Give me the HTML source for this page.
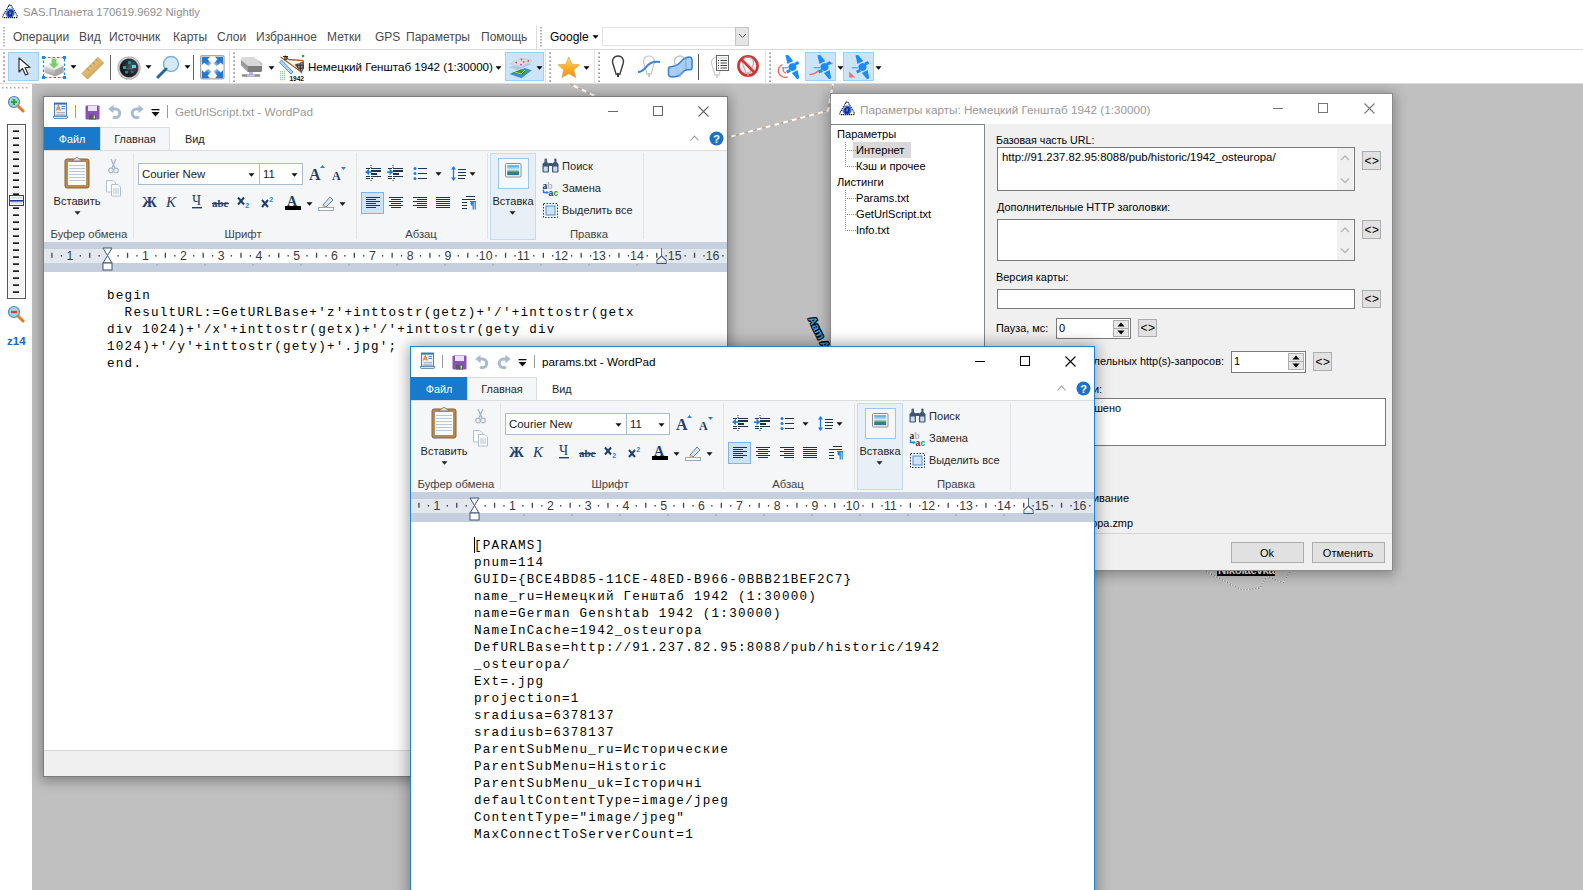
<!DOCTYPE html>
<html><head><meta charset="utf-8">
<style>
html,body{margin:0;padding:0;width:1583px;height:890px;overflow:hidden;background:#fff;position:relative;font-family:"Liberation Sans",sans-serif}
.a{position:absolute;display:block}
.t{position:absolute;white-space:pre;line-height:20px;height:20px;font-family:"Liberation Sans",sans-serif}
.doc{position:absolute;margin:0;font-family:"Liberation Mono",monospace;font-size:12.6px;letter-spacing:1.24px;line-height:17px;color:#000}
</style></head><body>
<div class="a" style="left:0px;top:0px;width:1583px;height:84px;background:#fff"></div>
<svg class="a" style="left:2px;top:4px;" width="16" height="15" viewBox="0 0 16 15"><path d="M6.8 1.6Q8 0 9.2 1.6L15 11.5Q16 13.6 13.6 13.6H2.4Q0 13.6 1 11.5Z" fill="#fff" stroke="#111" stroke-width="1.1" stroke-dasharray="1.3 0.7"/><circle cx="8" cy="9" r="4.6" fill="#2d6ff0"/><path d="M5 7Q8 5 11 7L10 12Q8 13.5 6 12Z" fill="#0b2a9a"/><rect x="7.4" y="7.5" width="1.4" height="3" fill="#b09040"/><path d="M4 9Q5 6 7 6" stroke="#fff" stroke-width="0.8" fill="none" opacity="0.7"/></svg>
<div class="t " style="left:23px;top:2px;font-size:11.3px;color:#8f8f8f;">SAS.Планета 170619.9692 Nightly</div>
<svg class="a" style="left:3px;top:27px;" width="3" height="22" viewBox="0 0 3 22"><rect x="0" y="0" width="2" height="1.5" fill="#b5b5b5"/><rect x="0" y="3" width="2" height="1.5" fill="#b5b5b5"/><rect x="0" y="6" width="2" height="1.5" fill="#b5b5b5"/><rect x="0" y="9" width="2" height="1.5" fill="#b5b5b5"/><rect x="0" y="12" width="2" height="1.5" fill="#b5b5b5"/><rect x="0" y="15" width="2" height="1.5" fill="#b5b5b5"/><rect x="0" y="18" width="2" height="1.5" fill="#b5b5b5"/></svg>
<div class="t " style="left:13px;top:27px;font-size:12px;color:#4a4a4a;">Операции</div>
<div class="t " style="left:79px;top:27px;font-size:12px;color:#4a4a4a;">Вид</div>
<div class="t " style="left:109px;top:27px;font-size:12px;color:#4a4a4a;">Источник</div>
<div class="t " style="left:173px;top:27px;font-size:12px;color:#4a4a4a;">Карты</div>
<div class="t " style="left:217px;top:27px;font-size:12px;color:#4a4a4a;">Слои</div>
<div class="t " style="left:256px;top:27px;font-size:12px;color:#4a4a4a;">Избранное</div>
<div class="t " style="left:327px;top:27px;font-size:12px;color:#4a4a4a;">Метки</div>
<div class="t " style="left:375px;top:27px;font-size:12px;color:#4a4a4a;">GPS</div>
<div class="t " style="left:406px;top:27px;font-size:12px;color:#4a4a4a;">Параметры</div>
<div class="t " style="left:481px;top:27px;font-size:12px;color:#4a4a4a;">Помощь</div>
<div class="a" style="left:536px;top:25px;width:1px;height:24px;background:#dcdcdc"></div>
<svg class="a" style="left:540px;top:27px;" width="3" height="22" viewBox="0 0 3 22"><rect x="0" y="0" width="2" height="1.5" fill="#b5b5b5"/><rect x="0" y="3" width="2" height="1.5" fill="#b5b5b5"/><rect x="0" y="6" width="2" height="1.5" fill="#b5b5b5"/><rect x="0" y="9" width="2" height="1.5" fill="#b5b5b5"/><rect x="0" y="12" width="2" height="1.5" fill="#b5b5b5"/><rect x="0" y="15" width="2" height="1.5" fill="#b5b5b5"/><rect x="0" y="18" width="2" height="1.5" fill="#b5b5b5"/></svg>
<div class="t " style="left:550px;top:27px;font-size:12px;color:#000;">Google</div>
<svg class="a" style="left:592px;top:35px;" width="7" height="4" viewBox="0 0 7 4"><path d="M0.5 0.3H6.5L3.5 3.8Z" fill="#000"/></svg>
<div class="a" style="left:602px;top:27px;width:146px;height:19px;background:#fff;border:1px solid #e3e3e3;box-sizing:border-box"></div>
<div class="a" style="left:735px;top:27px;width:14px;height:19px;background:#e5e5e5;border:1px solid #c4c4c4;box-sizing:border-box"></div>
<svg class="a" style="left:738px;top:33px;" width="9" height="6" viewBox="0 0 9 6"><path d="M1 1L4.5 4.5L8 1" fill="none" stroke="#555" stroke-width="1"/></svg>
<div class="a" style="left:0px;top:49px;width:1583px;height:1px;background:#d9d9d9"></div>
<svg class="a" style="left:3px;top:52px;" width="3" height="32" viewBox="0 0 3 32"><rect x="0" y="0" width="2" height="2" fill="#c4c4c4"/><rect x="1" y="1" width="1" height="1" fill="#999"/><rect x="0" y="4" width="2" height="2" fill="#c4c4c4"/><rect x="1" y="5" width="1" height="1" fill="#999"/><rect x="0" y="8" width="2" height="2" fill="#c4c4c4"/><rect x="1" y="9" width="1" height="1" fill="#999"/><rect x="0" y="12" width="2" height="2" fill="#c4c4c4"/><rect x="1" y="13" width="1" height="1" fill="#999"/><rect x="0" y="16" width="2" height="2" fill="#c4c4c4"/><rect x="1" y="17" width="1" height="1" fill="#999"/><rect x="0" y="20" width="2" height="2" fill="#c4c4c4"/><rect x="1" y="21" width="1" height="1" fill="#999"/><rect x="0" y="24" width="2" height="2" fill="#c4c4c4"/><rect x="1" y="25" width="1" height="1" fill="#999"/><rect x="0" y="28" width="2" height="2" fill="#c4c4c4"/><rect x="1" y="29" width="1" height="1" fill="#999"/></svg>
<div class="a" style="left:8px;top:52px;width:31px;height:29px;background:#cce4f7;border:1px solid #99d1ff;box-sizing:border-box"></div>
<svg class="a" style="left:17px;top:57px;" width="14" height="20" viewBox="0 0 14 20"><path d="M2 1V15L5.5 11.5L8.5 18L11 17L8 10.5H13Z" fill="#fff" stroke="#333" stroke-width="1.2" stroke-linejoin="round"/></svg>
<svg class="a" style="left:42px;top:56px;" width="25" height="23" viewBox="0 0 25 23"><defs><linearGradient id="bx" x1="0" y1="0" x2="0" y2="1"><stop offset="0" stop-color="#f4f4f4"/><stop offset="1" stop-color="#9c9c9c"/></linearGradient></defs><rect x="1.5" y="1.5" width="21" height="20" fill="none" stroke="#1e88e5" stroke-width="1.2" stroke-dasharray="2.5 2"/><path d="M2.5 10.5L11 7L21.5 10V16.5L13 20.5L2.5 16.5Z" fill="url(#bx)"/><path d="M2.5 10.5L13 14L21.5 10L11 7Z" fill="#ececec"/><path d="M13 14V20.5L21.5 16.5V10Z" fill="#a8a8a8"/><path d="M9.5 2.5H14.5V7.5H17L12 12.5L7 7.5H9.5Z" fill="#62c054" opacity="0.8"/><rect x="0" y="0" width="3" height="3" fill="#1e88e5"/><rect x="21" y="0" width="3" height="3" fill="#1e88e5"/><rect x="0" y="20" width="3" height="3" fill="#1e88e5"/><rect x="21" y="20" width="3" height="3" fill="#1e88e5"/></svg>
<svg class="a" style="left:70px;top:65px;" width="7" height="4" viewBox="0 0 7 4"><path d="M0.5 0.3H6.5L3.5 3.8Z" fill="#000"/></svg>
<svg class="a" style="left:81px;top:56px;" width="24" height="24" viewBox="0 0 24 24"><defs><linearGradient id="rg" x1="0" y1="0" x2="1" y2="1"><stop offset="0" stop-color="#f4d89a"/><stop offset="1" stop-color="#c8943e"/></linearGradient></defs><path d="M1 17.5L17 1.5L22.5 7L6.5 23Z" fill="url(#rg)" stroke="#b88838" stroke-width="0.8"/><path d="M6 12.5L8 14.5M9 9.5L10.5 11M12 6.5L14 8.5M15 3.5L16.5 5" stroke="#9a7030" stroke-width="0.7"/></svg>
<div class="a" style="left:110px;top:55px;width:1px;height:25px;background:#666"></div>
<svg class="a" style="left:117px;top:56px;" width="24" height="24" viewBox="0 0 24 24"><defs><radialGradient id="gg" cx="0.5" cy="0.5" r="0.5"><stop offset="0.78" stop-color="#555"/><stop offset="0.88" stop-color="#d8d8d8"/><stop offset="1" stop-color="#9a9a9a"/></radialGradient><radialGradient id="gi" cx="0.65" cy="0.4" r="0.7"><stop offset="0" stop-color="#3a6a70"/><stop offset="0.6" stop-color="#202428"/><stop offset="1" stop-color="#111"/></radialGradient></defs><circle cx="12" cy="12" r="11.5" fill="url(#gg)"/><circle cx="12" cy="12" r="9" fill="url(#gi)"/><rect x="6" y="10" width="3" height="3" fill="#2aa0a8"/><rect x="11" y="5" width="3" height="3" fill="#2a9aa0" opacity="0.8"/><rect x="15" y="9" width="4" height="3" fill="#38e0e8"/><rect x="8" y="15" width="3" height="2.5" fill="#1c8890"/><rect x="14" y="15" width="2.5" height="2" fill="#1c8890" opacity="0.8"/><path d="M9 12.5H16" stroke="#8ab" stroke-width="0.5" opacity="0.6"/></svg>
<svg class="a" style="left:145px;top:65px;" width="7" height="4" viewBox="0 0 7 4"><path d="M0.5 0.3H6.5L3.5 3.8Z" fill="#000"/></svg>
<svg class="a" style="left:156px;top:55px;" width="24" height="25" viewBox="0 0 24 25"><circle cx="15" cy="9" r="7.5" fill="#d5eaf7" stroke="#7fb3d5" stroke-width="1.5"/><path d="M10 14L2 22" stroke="#1d6a9a" stroke-width="3" stroke-linecap="round"/></svg>
<svg class="a" style="left:184px;top:65px;" width="7" height="4" viewBox="0 0 7 4"><path d="M0.5 0.3H6.5L3.5 3.8Z" fill="#000"/></svg>
<div class="a" style="left:193px;top:55px;width:1px;height:25px;background:#666"></div>
<svg class="a" style="left:200px;top:55px;" width="25" height="25" viewBox="0 0 25 25"><defs><linearGradient id="fg" x1="0" y1="0" x2="1" y2="1"><stop offset="0" stop-color="#2a78cc"/><stop offset="0.55" stop-color="#2a78cc"/><stop offset="1" stop-color="#2a78cc" stop-opacity="0"/></linearGradient></defs><rect x="0.6" y="0.6" width="23.5" height="23.2" rx="1.5" fill="#fff" stroke="#a9a9a9" stroke-width="1.2"/><path d="M1.8 1.8H10L7.6 4.4L11.6 8.4L8.4 11.6L4.4 7.6L1.8 10Z" fill="url(#fg)"/><g transform="translate(25 0) scale(-1 1)"><path d="M1.8 1.8H10L7.6 4.4L11.6 8.4L8.4 11.6L4.4 7.6L1.8 10Z" fill="url(#fg)"/></g><g transform="translate(0 25) scale(1 -1)"><path d="M1.8 1.8H10L7.6 4.4L11.6 8.4L8.4 11.6L4.4 7.6L1.8 10Z" fill="url(#fg)"/></g><g transform="translate(25 25) scale(-1 -1)"><path d="M1.8 1.8H10L7.6 4.4L11.6 8.4L8.4 11.6L4.4 7.6L1.8 10Z" fill="url(#fg)"/></g></svg>
<div class="a" style="left:229px;top:50px;width:1px;height:33px;background:#e1e1e1"></div>
<svg class="a" style="left:233px;top:52px;" width="3" height="32" viewBox="0 0 3 32"><rect x="0" y="0" width="2" height="2" fill="#c4c4c4"/><rect x="1" y="1" width="1" height="1" fill="#999"/><rect x="0" y="4" width="2" height="2" fill="#c4c4c4"/><rect x="1" y="5" width="1" height="1" fill="#999"/><rect x="0" y="8" width="2" height="2" fill="#c4c4c4"/><rect x="1" y="9" width="1" height="1" fill="#999"/><rect x="0" y="12" width="2" height="2" fill="#c4c4c4"/><rect x="1" y="13" width="1" height="1" fill="#999"/><rect x="0" y="16" width="2" height="2" fill="#c4c4c4"/><rect x="1" y="17" width="1" height="1" fill="#999"/><rect x="0" y="20" width="2" height="2" fill="#c4c4c4"/><rect x="1" y="21" width="1" height="1" fill="#999"/><rect x="0" y="24" width="2" height="2" fill="#c4c4c4"/><rect x="1" y="25" width="1" height="1" fill="#999"/><rect x="0" y="28" width="2" height="2" fill="#c4c4c4"/><rect x="1" y="29" width="1" height="1" fill="#999"/></svg>
<svg class="a" style="left:240px;top:55px;" width="26" height="25" viewBox="0 0 26 25"><defs><linearGradient id="dg" x1="0" y1="0" x2="0" y2="1"><stop offset="0" stop-color="#e6e6e6"/><stop offset="1" stop-color="#8c8c8c"/></linearGradient></defs><path d="M1 5Q1 2 4 2H14L22 8V15Q22 17 20 17H8L1 10Z" fill="url(#dg)"/><path d="M1 5L8 11H22L14 2H4Q1 2 1 5Z" fill="#d9d9d9"/><path d="M8 11V17L1 10V5Z" fill="#9a9a9a"/><path d="M8 11H22V15Q22 17 20 17H8Z" fill="#7d7d7d"/><rect x="9" y="17" width="4" height="3" fill="#b8b0e8"/><path d="M3 20.5H19" stroke="#8a8a8a" stroke-width="2.6" stroke-linecap="round"/><rect x="7" y="19.5" width="8" height="2" fill="#c9c0f0"/></svg>
<svg class="a" style="left:268px;top:66px;" width="7" height="4" viewBox="0 0 7 4"><path d="M0.5 0.3H6.5L3.5 3.8Z" fill="#000"/></svg>
<svg class="a" style="left:279px;top:55px;" width="27" height="26" viewBox="0 0 27 26"><g fill="#9bd27c"><rect x="1" y="16" width="1.3" height="1.3"/><rect x="1" y="18" width="1.3" height="1.3"/><rect x="1" y="20" width="1.3" height="1.3"/><rect x="1" y="22" width="1.3" height="1.3"/><rect x="1" y="24" width="1.3" height="1.3"/><rect x="3" y="16" width="1.3" height="1.3"/><rect x="3" y="18" width="1.3" height="1.3"/><rect x="3" y="20" width="1.3" height="1.3"/><rect x="3" y="22" width="1.3" height="1.3"/><rect x="3" y="24" width="1.3" height="1.3"/><rect x="5" y="16" width="1.3" height="1.3"/><rect x="5" y="18" width="1.3" height="1.3"/><rect x="5" y="20" width="1.3" height="1.3"/><rect x="5" y="22" width="1.3" height="1.3"/><rect x="5" y="24" width="1.3" height="1.3"/></g><path d="M2.5 5L14 17L12 19L0.5 7.5Z" fill="#a8d4f5" stroke="#3a78b8" stroke-width="0.8"/><path d="M15.5 9.5L25 6.5V13L22.5 18.5Z" fill="#2a2a2a"/><g fill="#e8e8e8"><rect x="16.0" y="8.0" width="0.75" height="0.75"/><rect x="16.0" y="9.5" width="0.75" height="0.75"/><rect x="16.0" y="11.0" width="0.75" height="0.75"/><rect x="16.0" y="12.5" width="0.75" height="0.75"/><rect x="16.0" y="14.0" width="0.75" height="0.75"/><rect x="16.0" y="15.5" width="0.75" height="0.75"/><rect x="16.0" y="17.0" width="0.75" height="0.75"/><rect x="17.5" y="8.0" width="0.75" height="0.75"/><rect x="17.5" y="9.5" width="0.75" height="0.75"/><rect x="17.5" y="11.0" width="0.75" height="0.75"/><rect x="17.5" y="12.5" width="0.75" height="0.75"/><rect x="17.5" y="14.0" width="0.75" height="0.75"/><rect x="17.5" y="15.5" width="0.75" height="0.75"/><rect x="17.5" y="17.0" width="0.75" height="0.75"/><rect x="19.0" y="8.0" width="0.75" height="0.75"/><rect x="19.0" y="9.5" width="0.75" height="0.75"/><rect x="19.0" y="11.0" width="0.75" height="0.75"/><rect x="19.0" y="12.5" width="0.75" height="0.75"/><rect x="19.0" y="14.0" width="0.75" height="0.75"/><rect x="19.0" y="15.5" width="0.75" height="0.75"/><rect x="19.0" y="17.0" width="0.75" height="0.75"/><rect x="20.5" y="8.0" width="0.75" height="0.75"/><rect x="20.5" y="9.5" width="0.75" height="0.75"/><rect x="20.5" y="11.0" width="0.75" height="0.75"/><rect x="20.5" y="12.5" width="0.75" height="0.75"/><rect x="20.5" y="14.0" width="0.75" height="0.75"/><rect x="20.5" y="15.5" width="0.75" height="0.75"/><rect x="20.5" y="17.0" width="0.75" height="0.75"/><rect x="22.0" y="8.0" width="0.75" height="0.75"/><rect x="22.0" y="9.5" width="0.75" height="0.75"/><rect x="22.0" y="11.0" width="0.75" height="0.75"/><rect x="22.0" y="12.5" width="0.75" height="0.75"/><rect x="22.0" y="14.0" width="0.75" height="0.75"/><rect x="22.0" y="15.5" width="0.75" height="0.75"/><rect x="22.0" y="17.0" width="0.75" height="0.75"/><rect x="23.5" y="8.0" width="0.75" height="0.75"/><rect x="23.5" y="9.5" width="0.75" height="0.75"/><rect x="23.5" y="11.0" width="0.75" height="0.75"/><rect x="23.5" y="12.5" width="0.75" height="0.75"/><rect x="23.5" y="14.0" width="0.75" height="0.75"/><rect x="23.5" y="15.5" width="0.75" height="0.75"/><rect x="23.5" y="17.0" width="0.75" height="0.75"/></g><path d="M1.5 2L23 17.5M6 0.5Q7 3 9.5 4.5L24 5.5V10" fill="none" stroke="#b05a28" stroke-width="1.3"/><path d="M4 1.5H9M5 3H9M5 4.3H8" stroke="#111" stroke-width="0.9"/><rect x="23" y="0" width="2.2" height="2.2" fill="#22aa22"/><rect x="10" y="19.5" width="16" height="7" fill="#fff"/><text x="10.5" y="25.8" font-family="Liberation Sans" font-size="7.5" font-weight="bold" fill="#111" textLength="14.5" lengthAdjust="spacingAndGlyphs">1942</text></svg>
<div class="t " style="left:308px;top:57px;font-size:11.6px;color:#000;">Немецкий Генштаб 1942 (1:30000)</div>
<svg class="a" style="left:495px;top:66px;" width="7" height="4" viewBox="0 0 7 4"><path d="M0.5 0.3H6.5L3.5 3.8Z" fill="#000"/></svg>
<div class="a" style="left:505px;top:52px;width:39px;height:29px;background:#cce4f7;border:1px solid #99d1ff;box-sizing:border-box"></div>
<svg class="a" style="left:509px;top:56px;" width="24" height="24" viewBox="0 0 24 24"><path d="M0.3 17.9L15.8 11.9L22.8 14.2L12.5 22.2Z" fill="#3d8fd8"/><path d="M3 17L12 13.5L17 16L14 19L9 18Z" fill="#2e9a3a"/><path d="M6 16L12 18L16 14" stroke="#e8e070" stroke-width="0.8" fill="none"/><path d="M0.6 11.2L14.5 6.6L22.8 7.9L8.5 13.9Z" fill="#a9c4e0" opacity="0.85"/><path d="M1.3 7.9L12.5 2L23.1 4.6L11.9 11.2Z" fill="#d8dde3" stroke="#b8bfc8" stroke-width="0.5"/><g fill="#e04848"><circle cx="12.5" cy="3.5" r="0.9"/><circle cx="7.2" cy="6.6" r="0.9"/><circle cx="14.8" cy="6" r="0.9"/><circle cx="11.9" cy="8.6" r="0.9"/><circle cx="19.2" cy="4.9" r="0.9"/></g></svg>
<svg class="a" style="left:536px;top:66px;" width="7" height="4" viewBox="0 0 7 4"><path d="M0.5 0.3H6.5L3.5 3.8Z" fill="#000"/></svg>
<div class="a" style="left:545px;top:50px;width:1px;height:33px;background:#e1e1e1"></div>
<svg class="a" style="left:549px;top:52px;" width="3" height="32" viewBox="0 0 3 32"><rect x="0" y="0" width="2" height="2" fill="#c4c4c4"/><rect x="1" y="1" width="1" height="1" fill="#999"/><rect x="0" y="4" width="2" height="2" fill="#c4c4c4"/><rect x="1" y="5" width="1" height="1" fill="#999"/><rect x="0" y="8" width="2" height="2" fill="#c4c4c4"/><rect x="1" y="9" width="1" height="1" fill="#999"/><rect x="0" y="12" width="2" height="2" fill="#c4c4c4"/><rect x="1" y="13" width="1" height="1" fill="#999"/><rect x="0" y="16" width="2" height="2" fill="#c4c4c4"/><rect x="1" y="17" width="1" height="1" fill="#999"/><rect x="0" y="20" width="2" height="2" fill="#c4c4c4"/><rect x="1" y="21" width="1" height="1" fill="#999"/><rect x="0" y="24" width="2" height="2" fill="#c4c4c4"/><rect x="1" y="25" width="1" height="1" fill="#999"/><rect x="0" y="28" width="2" height="2" fill="#c4c4c4"/><rect x="1" y="29" width="1" height="1" fill="#999"/></svg>
<svg class="a" style="left:556px;top:55px;" width="26" height="25" viewBox="0 0 26 25"><defs><linearGradient id="sg" x1="0" y1="0" x2="0" y2="1"><stop offset="0" stop-color="#ffe070"/><stop offset="0.45" stop-color="#fbb530"/><stop offset="1" stop-color="#f48a10"/></linearGradient></defs><path d="M12.8 2L15.9 9.2L23.6 9.8L17.8 14.9L19.7 22.6L12.8 18.5L5.9 22.6L7.8 14.9L2 9.8L9.7 9.2Z" fill="url(#sg)" stroke="#e0a040" stroke-width="0.7" stroke-linejoin="round"/></svg>
<svg class="a" style="left:583px;top:66px;" width="7" height="4" viewBox="0 0 7 4"><path d="M0.5 0.3H6.5L3.5 3.8Z" fill="#000"/></svg>
<div class="a" style="left:594px;top:50px;width:1px;height:33px;background:#e1e1e1"></div>
<svg class="a" style="left:598px;top:52px;" width="3" height="32" viewBox="0 0 3 32"><rect x="0" y="0" width="2" height="2" fill="#c4c4c4"/><rect x="1" y="1" width="1" height="1" fill="#999"/><rect x="0" y="4" width="2" height="2" fill="#c4c4c4"/><rect x="1" y="5" width="1" height="1" fill="#999"/><rect x="0" y="8" width="2" height="2" fill="#c4c4c4"/><rect x="1" y="9" width="1" height="1" fill="#999"/><rect x="0" y="12" width="2" height="2" fill="#c4c4c4"/><rect x="1" y="13" width="1" height="1" fill="#999"/><rect x="0" y="16" width="2" height="2" fill="#c4c4c4"/><rect x="1" y="17" width="1" height="1" fill="#999"/><rect x="0" y="20" width="2" height="2" fill="#c4c4c4"/><rect x="1" y="21" width="1" height="1" fill="#999"/><rect x="0" y="24" width="2" height="2" fill="#c4c4c4"/><rect x="1" y="25" width="1" height="1" fill="#999"/><rect x="0" y="28" width="2" height="2" fill="#c4c4c4"/><rect x="1" y="29" width="1" height="1" fill="#999"/></svg>
<svg class="a" style="left:606px;top:54px;" width="24" height="26" viewBox="0 0 24 26"><path d="M10.4 21.0L7.0 10.1A5.6 5.6 0 1 1 17.0 10.1L13.6 21.0" fill="none" stroke="#3a3a3a" stroke-width="1.4"/><path d="M12 19V23" stroke="#3a3a3a" stroke-width="2.0"/></svg>
<svg class="a" style="left:636px;top:54px;" width="26" height="26" viewBox="0 0 26 26"><path d="M11.4 21.0L8.0 10.1A5.6 5.6 0 1 1 18.0 10.1L14.6 21.0" fill="none" stroke="#c4c4c4" stroke-width="1.2"/><path d="M13 19V23" stroke="#c4c4c4" stroke-width="1.7999999999999998"/><path d="M2 18C7 18 9 14 12 11S18 7 24 8" fill="none" stroke="#3a80d8" stroke-width="2"/></svg>
<svg class="a" style="left:667px;top:54px;" width="27" height="26" viewBox="0 0 27 26"><path d="M11.4 21.0L8.0 10.1A5.6 5.6 0 1 1 18.0 10.1L14.6 21.0" fill="none" stroke="#c4c4c4" stroke-width="1.2"/><path d="M13 19V23" stroke="#c4c4c4" stroke-width="1.7999999999999998"/><path d="M1.5 15Q1.5 12.5 5 12.5Q10 12 13.5 8Q17 3.5 22 3Q25 3 25 6V14Q25 16.5 21 15.5Q17 16 14 20Q11 23 5 23Q1.5 23 1.5 20Z" fill="#a8cff5" stroke="#3a80d8" stroke-width="1.5"/><path d="M19 4V15" stroke="#3a80d8" stroke-width="0.8" opacity="0.6"/><path d="M11.4 21.0L8.0 10.1A5.6 5.6 0 1 1 18.0 10.1L14.6 21.0" fill="none" stroke="#9ab8d8" stroke-width="0.6"/><path d="M13 19V23" stroke="#9ab8d8" stroke-width="1.2"/></svg>
<div class="a" style="left:698px;top:54px;width:1px;height:26px;background:#555"></div>
<svg class="a" style="left:706px;top:54px;" width="26" height="26" viewBox="0 0 26 26"><path d="M9.4 22.0L6.0 11.1A5.6 5.6 0 1 1 16.0 11.1L12.6 22.0" fill="none" stroke="#cccccc" stroke-width="1.2"/><path d="M11 20V24" stroke="#cccccc" stroke-width="1.7999999999999998"/><rect x="10.5" y="1.5" width="12" height="15" fill="#fff" stroke="#666"/><path d="M12 4H21" stroke="#9ab" stroke-width="0.7"/><path d="M14.5 6.5H21M14.5 9H21M14.5 11.5H21M14.5 14H21" stroke="#444" stroke-width="1"/><path d="M12 6.5H13M12 9H13M12 11.5H13M12 14H13" stroke="#444" stroke-width="1"/></svg>
<svg class="a" style="left:736px;top:54px;" width="24" height="26" viewBox="0 0 24 26"><defs><radialGradient id="ng" cx="0.4" cy="0.35" r="0.7"><stop offset="0" stop-color="#fff"/><stop offset="1" stop-color="#f0d8d8"/></radialGradient></defs><circle cx="12" cy="12" r="9.6" fill="url(#ng)" stroke="#d23838" stroke-width="2.6"/><path d="M10.4 20.0L7.0 11.1A5.6 5.6 0 1 1 17.0 11.1L13.6 20.0" fill="none" stroke="#b0b0b0" stroke-width="1.1"/><path d="M12 18V22" stroke="#b0b0b0" stroke-width="1.7000000000000002"/><path d="M5.5 5.5L18.5 18.5" stroke="#d23838" stroke-width="2.6"/><circle cx="12" cy="12" r="9.6" fill="none" stroke="#a82020" stroke-width="0.6" opacity="0.5"/></svg>
<div class="a" style="left:765px;top:50px;width:1px;height:33px;background:#e1e1e1"></div>
<svg class="a" style="left:769px;top:52px;" width="3" height="32" viewBox="0 0 3 32"><rect x="0" y="0" width="2" height="2" fill="#c4c4c4"/><rect x="1" y="1" width="1" height="1" fill="#999"/><rect x="0" y="4" width="2" height="2" fill="#c4c4c4"/><rect x="1" y="5" width="1" height="1" fill="#999"/><rect x="0" y="8" width="2" height="2" fill="#c4c4c4"/><rect x="1" y="9" width="1" height="1" fill="#999"/><rect x="0" y="12" width="2" height="2" fill="#c4c4c4"/><rect x="1" y="13" width="1" height="1" fill="#999"/><rect x="0" y="16" width="2" height="2" fill="#c4c4c4"/><rect x="1" y="17" width="1" height="1" fill="#999"/><rect x="0" y="20" width="2" height="2" fill="#c4c4c4"/><rect x="1" y="21" width="1" height="1" fill="#999"/><rect x="0" y="24" width="2" height="2" fill="#c4c4c4"/><rect x="1" y="25" width="1" height="1" fill="#999"/><rect x="0" y="28" width="2" height="2" fill="#c4c4c4"/><rect x="1" y="29" width="1" height="1" fill="#999"/></svg>
<svg class="a" style="left:777px;top:55px;" width="25" height="25" viewBox="0 0 25 25"><path d="M5.5 9.5A6.5 6.5 0 0 0 10.5 21.8" fill="none" stroke="#ff5a5a" stroke-width="1.3"/><path d="M6.8 12.8A3 3 0 0 0 9 17.8" fill="none" stroke="#ff5a5a" stroke-width="1.2"/><g transform="translate(15.5 12) rotate(64)" fill="#1b8cf5"><path d="M-13.5 -1.2L-5 -3.2V3.2L-13.5 1.2Z"/><path d="M5 -3.2L13 -1.2V1.2L5 3.2Z"/><circle cx="0" cy="0" r="3.9"/><rect x="-3" y="-7.5" width="3" height="4"/><rect x="0.5" y="3.5" width="3" height="4"/><path d="M-1 4L-4 10" stroke="#1b8cf5" stroke-width="0.8"/></g></svg>
<div class="a" style="left:805px;top:52px;width:31px;height:29px;background:#cce4f7;border:1px solid #99d1ff;box-sizing:border-box"></div>
<svg class="a" style="left:809px;top:55px;" width="25" height="25" viewBox="0 0 25 25"><path d="M0.5 19.5Q6 19.5 10 15M18 9Q21 7.5 23.5 8.8" fill="none" stroke="#ff6b6b" stroke-width="1.7"/><g transform="translate(15.5 12) rotate(64)" fill="#1b8cf5"><path d="M-13.5 -1.2L-5 -3.2V3.2L-13.5 1.2Z"/><path d="M5 -3.2L13 -1.2V1.2L5 3.2Z"/><circle cx="0" cy="0" r="3.9"/><rect x="-3" y="-7.5" width="3" height="4"/><rect x="0.5" y="3.5" width="3" height="4"/><path d="M-1 4L-4 10" stroke="#1b8cf5" stroke-width="0.8"/></g></svg>
<svg class="a" style="left:837px;top:66px;" width="7" height="4" viewBox="0 0 7 4"><path d="M0.5 0.3H6.5L3.5 3.8Z" fill="#000"/></svg>
<div class="a" style="left:843px;top:52px;width:31px;height:29px;background:#cce4f7;border:1px solid #99d1ff;box-sizing:border-box"></div>
<svg class="a" style="left:847px;top:55px;" width="25" height="25" viewBox="0 0 25 25"><path d="M2.2 16.5V22.6H8.2Z" fill="#ff6b6b"/><g transform="translate(15.5 12) rotate(64)" fill="#1b8cf5"><path d="M-13.5 -1.2L-5 -3.2V3.2L-13.5 1.2Z"/><path d="M5 -3.2L13 -1.2V1.2L5 3.2Z"/><circle cx="0" cy="0" r="3.9"/><rect x="-3" y="-7.5" width="3" height="4"/><rect x="0.5" y="3.5" width="3" height="4"/><path d="M-1 4L-4 10" stroke="#1b8cf5" stroke-width="0.8"/></g></svg>
<svg class="a" style="left:875px;top:66px;" width="7" height="4" viewBox="0 0 7 4"><path d="M0.5 0.3H6.5L3.5 3.8Z" fill="#000"/></svg>
<div class="a" style="left:32px;top:84px;width:1551px;height:806px;background:#c0c0c0"></div>
<div class="a" style="left:0px;top:84px;width:32px;height:806px;background:#fff"></div>
<div class="a" style="left:0px;top:83px;width:1583px;height:1px;background:#dedede"></div>
<svg class="a" style="left:1px;top:87px;" width="30" height="3" viewBox="0 0 30 3"><rect x="1" y="0" width="1.5" height="1.5" fill="#a8a8a8"/><rect x="5" y="0" width="1.5" height="1.5" fill="#a8a8a8"/><rect x="9" y="0" width="1.5" height="1.5" fill="#a8a8a8"/><rect x="13" y="0" width="1.5" height="1.5" fill="#a8a8a8"/><rect x="17" y="0" width="1.5" height="1.5" fill="#a8a8a8"/><rect x="21" y="0" width="1.5" height="1.5" fill="#a8a8a8"/><rect x="25" y="0" width="1.5" height="1.5" fill="#a8a8a8"/></svg>
<svg class="a" style="left:7px;top:95px;" width="18" height="18" viewBox="0 0 18 18"><circle cx="7" cy="7" r="5.5" fill="#9fd3ea" stroke="#5a8aa8" stroke-width="1.2"/><path d="M4 7H10M7 4V10" stroke="#2fa82f" stroke-width="2.2"/><path d="M11 11L16 16" stroke="#e8782a" stroke-width="3" stroke-linecap="round"/></svg>
<svg class="a" style="left:7px;top:124px;" width="19" height="175" viewBox="0 0 19 175"><rect x="0.5" y="0.5" width="18" height="174" fill="#f3f3f3" stroke="#555"/><rect x="1.5" y="1.5" width="16" height="172" fill="none" stroke="#fff"/><rect x="6" y="6.40" width="6" height="1.6" fill="#111"/><rect x="6" y="13.40" width="6" height="1.6" fill="#111"/><rect x="6" y="20.39" width="6" height="1.6" fill="#111"/><rect x="6" y="27.39" width="6" height="1.6" fill="#111"/><rect x="6" y="34.38" width="6" height="1.6" fill="#111"/><rect x="6" y="41.38" width="6" height="1.6" fill="#111"/><rect x="6" y="48.38" width="6" height="1.6" fill="#111"/><rect x="6" y="55.37" width="6" height="1.6" fill="#111"/><rect x="6" y="62.37" width="6" height="1.6" fill="#111"/><rect x="6" y="69.36" width="6" height="1.6" fill="#111"/><rect x="6" y="76.36" width="6" height="1.6" fill="#111"/><rect x="6" y="83.36" width="6" height="1.6" fill="#111"/><rect x="6" y="90.35" width="6" height="1.6" fill="#111"/><rect x="6" y="97.35" width="6" height="1.6" fill="#111"/><rect x="6" y="104.34" width="6" height="1.6" fill="#111"/><rect x="6" y="111.34" width="6" height="1.6" fill="#111"/><rect x="6" y="118.34" width="6" height="1.6" fill="#111"/><rect x="6" y="125.33" width="6" height="1.6" fill="#111"/><rect x="6" y="132.33" width="6" height="1.6" fill="#111"/><rect x="6" y="139.32" width="6" height="1.6" fill="#111"/><rect x="6" y="146.32" width="6" height="1.6" fill="#111"/><rect x="6" y="153.32" width="6" height="1.6" fill="#111"/><rect x="6" y="160.31" width="6" height="1.6" fill="#111"/><rect x="6" y="167.31" width="6" height="1.6" fill="#111"/><rect x="2.5" y="71.5" width="14" height="10" fill="#f8f8f8" stroke="#444"/><rect x="4" y="73.5" width="11" height="0.8" fill="#bbb"/><rect x="4" y="78.5" width="11" height="0.8" fill="#bbb"/><rect x="3" y="76" width="13" height="1.6" fill="#1a3a9a"/></svg>
<svg class="a" style="left:7px;top:305px;" width="18" height="18" viewBox="0 0 18 18"><circle cx="7" cy="7" r="5.5" fill="#9fd3ea" stroke="#5a8aa8" stroke-width="1.2"/><path d="M4 7H10" stroke="#e23b2a" stroke-width="2.2"/><path d="M11 11L16 16" stroke="#e8782a" stroke-width="3" stroke-linecap="round"/></svg>
<div class="t " style="left:7px;top:331px;font-size:11.5px;color:#1a63c9;font-weight:bold">z14</div>
<svg class="a" style="left:560px;top:80px;" width="290" height="70" viewBox="0 0 290 70"><path d="M10 4L35 16M167 57.6L268 30.7L273 4" fill="none" stroke="#fff" stroke-width="2"/><path d="M10 4L35 16M167 57.6L268 30.7L273 4" fill="none" stroke="#b9a898" stroke-width="2" stroke-dasharray="4 5"/></svg>
<div class="a" style="left:818px;top:314px;transform-origin:0 0;transform:rotate(64deg);font-family:Liberation Sans;font-size:11px;line-height:14px;font-weight:bold;color:#2aa8ee;white-space:pre;text-shadow:1px 0 0 #000,-1px 0 0 #000,0 1px 0 #000,0 -1px 0 #000,1px 1px 0 #000,-1px -1px 0 #000,1px -1px 0 #000,-1px 1px 0 #000">Aam A</div>
<div class="a" style="left:1217px;top:560px;width:58px;height:16px;background:#000"></div>
<div class="t " style="left:1218px;top:559.5px;font-size:11.4px;color:#f4ece4;font-weight:bold;letter-spacing:-0.3px">Nikolaevka</div>
<svg class="a" style="left:1195px;top:565px;" width="100" height="30" viewBox="0 0 100 30"><path d="M8 5L47 25L65 23L72 11L88 18L96 5" fill="none" stroke="#666" stroke-width="0.9" stroke-dasharray="1.5 1.5" opacity="0.8"/><path d="M8 5L47 25L65 23L72 11L88 18L96 5" fill="none" stroke="#f4f4f4" stroke-width="0.9" stroke-dasharray="1.5 1.5" stroke-dashoffset="1.5" opacity="0.8"/></svg>
<div class="a" style="left:43px;top:96px;width:685px;height:681px;background:#fff;border:1px solid #7d7d7d;box-sizing:border-box;overflow:hidden;box-shadow:0 2px 12px 2px rgba(0,0,0,0.33)">
<svg class="a" style="left:8px;top:5px;" width="17" height="18" viewBox="0 0 17 18"><rect x="2.5" y="1" width="12" height="13" fill="#e6f0fa" stroke="#4a82b8"/><rect x="2.5" y="1" width="12" height="1.6" fill="#3a72aa"/><path d="M4.3 8.5L6.3 3.8L8.3 8.5M5 7H7.6" stroke="#f08a24" stroke-width="1.3" fill="none"/><path d="M9.5 4.5H13M9.5 6.5H13" stroke="#3a82d0" stroke-width="0.9"/><path d="M4.5 10.5H13M4.5 12.3H13" stroke="#8a9ab0" stroke-width="0.7"/><path d="M1 14.5H16L15 16.5H2Z" fill="#d6e6f4" stroke="#4a82b8" stroke-width="0.8"/></svg>
<div class="a" style="left:31px;top:8px;width:1px;height:13px;background:#9a9a9a"></div>
<svg class="a" style="left:41px;top:8px;" width="15" height="15" viewBox="0 0 15 15"><rect x="0.5" y="0.5" width="14" height="14" rx="1" fill="#8a52b8"/><rect x="3" y="1" width="9" height="5" fill="#e9e3f3"/><rect x="4" y="9.5" width="7" height="5" fill="#5c5c5c"/><rect x="8.5" y="10.5" width="1.5" height="3" fill="#ccc"/></svg>
<svg class="a" style="left:64px;top:7px;" width="14" height="16" viewBox="0 0 14 16"><path d="M4.5 5H7.5A4.3 4.3 0 0 1 7.5 13.6H6" fill="none" stroke="#a8bbd2" stroke-width="3" stroke-linecap="round"/><path d="M0.3 5L5.5 0.8V9.2Z" fill="#a8bbd2"/></svg>
<svg class="a" style="left:86px;top:7px;" width="14" height="16" viewBox="0 0 14 16"><path d="M9.5 5H6.5A4.3 4.3 0 0 0 6.5 13.6H8" fill="none" stroke="#a8bbd2" stroke-width="3" stroke-linecap="round"/><path d="M13.7 5L8.5 0.8V9.2Z" fill="#a8bbd2"/></svg>
<svg class="a" style="left:107px;top:12px;" width="9" height="8" viewBox="0 0 9 8"><rect x="0.5" y="0" width="8" height="1.3" fill="#111"/><path d="M0.5 3H8.5L4.5 7.5Z" fill="#111"/></svg>
<div class="a" style="left:123px;top:8px;width:1px;height:13px;background:#9a9a9a"></div>
<div class="t " style="left:131px;top:5px;font-size:11.7px;color:#999;">GetUrlScript.txt - WordPad</div>
<div class="a" style="left:564px;top:14px;width:10px;height:1px;background:#666"></div>
<div class="a" style="left:609px;top:9px;width:10px;height:10px;border:1px solid #666;box-sizing:border-box"></div>
<svg class="a" style="left:654px;top:9px;" width="11" height="11" viewBox="0 0 11 11"><path d="M0.5 0.5L10.5 10.5M10.5 0.5L0.5 10.5" stroke="#666" stroke-width="1.1"/></svg>
<div class="a" style="left:0px;top:30px;width:56px;height:23px;background:#1979ca"></div>
<div class="t " style="left:0.0px;top:32px;width:56px;text-align:center;font-size:10.8px;color:#fff;">Файл</div>
<div class="a" style="left:56px;top:30px;width:70px;height:24px;background:#f5f6f7;border:1px solid #dadbdc;border-bottom:none;box-sizing:border-box"></div>
<div class="t " style="left:56.0px;top:32px;width:70px;text-align:center;font-size:10.9px;color:#262626;">Главная</div>
<div class="t " style="left:141px;top:32px;font-size:10.9px;color:#262626;">Вид</div>
<svg class="a" style="left:646px;top:38px;" width="9" height="6" viewBox="0 0 9 6"><path d="M0.5 5.5L4.5 1L8.5 5.5" fill="none" stroke="#9a9a9a" stroke-width="1.1"/></svg>
<svg class="a" style="left:665px;top:34px;" width="15" height="15" viewBox="0 0 15 15"><circle cx="7.5" cy="7.5" r="7" fill="#1a73c8"/><text x="7.5" y="11.5" text-anchor="middle" font-family="Liberation Sans" font-weight="bold" font-size="11" fill="#fff">?</text></svg>
<div class="a" style="left:0px;top:53px;width:683px;height:92px;background:#f5f6f7;border-top:1px solid #dadbdc;box-sizing:border-box"></div>
<div class="a" style="left:89px;top:56px;width:1px;height:86px;background:#e2e3e4"></div>
<div class="a" style="left:312px;top:56px;width:1px;height:86px;background:#e2e3e4"></div>
<div class="a" style="left:443px;top:56px;width:1px;height:86px;background:#e2e3e4"></div>
<div class="a" style="left:599px;top:56px;width:1px;height:86px;background:#e2e3e4"></div>
<svg class="a" style="left:20px;top:59px;" width="26" height="33" viewBox="0 0 26 33"><rect x="1" y="3" width="24" height="29" rx="2" fill="#b98a4e" stroke="#8a6232"/><rect x="4" y="6" width="18" height="23" fill="#fbfbfb"/><rect x="5" y="9" width="16" height="1" fill="#b8c8d8"/><rect x="5" y="12" width="16" height="1" fill="#b8c8d8"/><rect x="5" y="15" width="16" height="1" fill="#b8c8d8"/><rect x="5" y="18" width="16" height="1" fill="#b8c8d8"/><rect x="5" y="21" width="16" height="1" fill="#b8c8d8"/><rect x="5" y="24" width="16" height="1" fill="#b8c8d8"/><path d="M8 5L13 1L18 5Z" fill="#ddd" stroke="#777" stroke-width="0.8"/></svg>
<div class="t " style="left:-7.0px;top:94px;width:80px;text-align:center;font-size:11.1px;color:#262626;">Вставить</div>
<svg class="a" style="left:30px;top:114px;" width="7" height="4" viewBox="0 0 7 4"><path d="M0.5 0.3H6.5L3.5 3.8Z" fill="#222"/></svg>
<svg class="a" style="left:64px;top:61px;" width="11" height="16" viewBox="0 0 11 16"><path d="M3 1L7 10M8 1L4 10" stroke="#a8b8cc" stroke-width="1.4"/><circle cx="3" cy="12.5" r="2.3" fill="none" stroke="#a8b8cc" stroke-width="1.2"/><circle cx="8" cy="12.5" r="2.3" fill="none" stroke="#a8b8cc" stroke-width="1.2"/></svg>
<svg class="a" style="left:62px;top:83px;" width="16" height="17" viewBox="0 0 16 17"><path d="M0.5 0.5H7L9.5 3V12H0.5Z" fill="#fff" stroke="#b0c0d4"/><path d="M5.5 4.5H12L14.5 7V16H5.5Z" fill="#fff" stroke="#b0c0d4"/><path d="M7 9H13M7 11H13M7 13H13" stroke="#b0c0d4"/></svg>
<div class="t " style="left:-5.0px;top:127px;width:100px;text-align:center;font-size:11.3px;color:#444;">Буфер обмена</div>
<div class="a" style="left:94px;top:66px;width:122px;height:22px;background:#fff;border:1px solid #abbad0;box-sizing:border-box"></div>
<div class="a" style="left:215px;top:66px;width:44px;height:22px;background:#fff;border:1px solid #abbad0;box-sizing:border-box"></div>
<div class="t " style="left:98px;top:67px;font-size:11.4px;color:#1a1a1a;">Courier New</div>
<div class="t " style="left:219px;top:67px;font-size:11.4px;color:#1a1a1a;">11</div>
<svg class="a" style="left:204px;top:76px;" width="7" height="4" viewBox="0 0 7 4"><path d="M0.5 0.3H6.5L3.5 3.8Z" fill="#111"/></svg>
<svg class="a" style="left:247px;top:76px;" width="7" height="4" viewBox="0 0 7 4"><path d="M0.5 0.3H6.5L3.5 3.8Z" fill="#111"/></svg>
<svg class="a" style="left:265px;top:68px;" width="16" height="16" viewBox="0 0 16 16"><text x="0" y="15" font-family="Liberation Serif" font-weight="bold" font-size="16" fill="#1f3f6a">A</text><path d="M11 3H16L13.5 0Z" fill="#2b7fd6"/></svg>
<svg class="a" style="left:288px;top:69px;" width="15" height="15" viewBox="0 0 15 15"><text x="0" y="14" font-family="Liberation Serif" font-weight="bold" font-size="12" fill="#1f3f6a">A</text><path d="M9 1H14L11.5 4Z" fill="#2b7fd6"/></svg>
<svg class="a" style="left:98px;top:98px;" width="17" height="14" viewBox="0 0 17 14"><text x="0" y="12" font-family="Liberation Serif" font-weight="bold" font-size="15" fill="#1f3f6a">Ж</text></svg>
<svg class="a" style="left:122px;top:98px;" width="14" height="14" viewBox="0 0 14 14"><text x="0" y="12" font-family="Liberation Serif" font-style="italic" font-size="15" fill="#1f3f6a">К</text></svg>
<svg class="a" style="left:147px;top:97px;" width="13" height="16" viewBox="0 0 13 16"><text x="1" y="11" font-family="Liberation Serif" font-size="14" fill="#1f3f6a">Ч</text><rect x="1" y="13" width="10" height="1.4" fill="#1f3f6a"/></svg>
<svg class="a" style="left:168px;top:100px;" width="18" height="12" viewBox="0 0 18 12"><text x="0" y="10" font-family="Liberation Serif" font-weight="bold" font-size="11" fill="#1f3f6a">abc</text><rect x="0" y="6" width="17" height="1.2" fill="#1f3f6a"/></svg>
<svg class="a" style="left:193px;top:98px;" width="15" height="14" viewBox="0 0 15 14"><path d="M1 2.5L7 9.5M7 2.5L1 9.5" stroke="#1f3f6a" stroke-width="2"/><text x="8.3" y="12.5" font-family="Liberation Sans" font-weight="bold" font-size="7" fill="#2b7fd6">2</text></svg>
<svg class="a" style="left:217px;top:98px;" width="15" height="14" viewBox="0 0 15 14"><path d="M1 5L7 12M7 5L1 12" stroke="#1f3f6a" stroke-width="2"/><text x="8.3" y="6.5" font-family="Liberation Sans" font-weight="bold" font-size="7" fill="#2b7fd6">2</text></svg>
<svg class="a" style="left:241px;top:98px;" width="18" height="17" viewBox="0 0 18 17"><text x="2" y="11" font-family="Liberation Serif" font-weight="bold" font-size="14" fill="#1f3f6a">A</text><rect x="0" y="11" width="16" height="4" fill="#000"/></svg>
<svg class="a" style="left:262px;top:105px;" width="7" height="4" viewBox="0 0 7 4"><path d="M0.5 0.3H6.5L3.5 3.8Z" fill="#111"/></svg>
<svg class="a" style="left:274px;top:98px;" width="18" height="17" viewBox="0 0 18 17"><path d="M5 10L12 2L15 5L8 12Z" fill="#dce8f5" stroke="#5f7fa8"/><path d="M4 11L5 10L8 12L6 13Z" fill="#e8c070"/><rect x="0.5" y="12.5" width="15" height="3" fill="#fff" stroke="#9ab"/></svg>
<svg class="a" style="left:295px;top:105px;" width="7" height="4" viewBox="0 0 7 4"><path d="M0.5 0.3H6.5L3.5 3.8Z" fill="#111"/></svg>
<div class="t " style="left:159.0px;top:127px;width:80px;text-align:center;font-size:11.3px;color:#444;">Шрифт</div>
<svg class="a" style="left:321px;top:68px;" width="18" height="17" viewBox="0 0 18 17"><rect x="1" y="3" width="4" height="1" fill="#1e3350"/><rect x="6" y="3" width="10" height="1" fill="#1e3350"/><rect x="6" y="5" width="10" height="2" fill="#1e3350"/><rect x="6" y="8" width="6" height="2" fill="#1e3350"/><rect x="1" y="11" width="4" height="1" fill="#1e3350"/><rect x="6" y="11" width="10" height="1" fill="#1e3350"/><rect x="1" y="13" width="4" height="1" fill="#1e3350"/><rect x="6" y="13" width="2" height="1" fill="#1e3350"/><rect x="5.5" y="0" width="1" height="1" fill="#1e3350"/><rect x="5.5" y="2" width="1" height="1" fill="#1e3350"/><rect x="5.5" y="15" width="1" height="1" fill="#1e3350"/><path d="M0 7L4 3.8V10.2Z" fill="#1f7fd8"/><rect x="3.5" y="6.3" width="3" height="1.6" fill="#1f7fd8"/></svg>
<svg class="a" style="left:343px;top:68px;" width="18" height="17" viewBox="0 0 18 17"><rect x="1" y="3" width="4" height="1" fill="#1e3350"/><rect x="6" y="3" width="10" height="1" fill="#1e3350"/><rect x="6" y="5" width="10" height="2" fill="#1e3350"/><rect x="6" y="8" width="6" height="2" fill="#1e3350"/><rect x="1" y="11" width="4" height="1" fill="#1e3350"/><rect x="6" y="11" width="10" height="1" fill="#1e3350"/><rect x="1" y="13" width="4" height="1" fill="#1e3350"/><rect x="6" y="13" width="2" height="1" fill="#1e3350"/><rect x="5.5" y="0" width="1" height="1" fill="#1e3350"/><rect x="5.5" y="2" width="1" height="1" fill="#1e3350"/><rect x="5.5" y="15" width="1" height="1" fill="#1e3350"/><path d="M6.5 7L2.5 3.8V10.2Z" fill="#1f7fd8"/><rect x="0" y="6.3" width="3" height="1.6" fill="#1f7fd8"/></svg>
<svg class="a" style="left:369px;top:69px;" width="15" height="14" viewBox="0 0 15 14"><circle cx="2" cy="2.5" r="1.5" fill="#1f7fd8"/><circle cx="2" cy="7.5" r="1.5" fill="#1f7fd8"/><circle cx="2" cy="12.5" r="1.5" fill="#1f7fd8"/><rect x="5" y="2" width="9" height="1" fill="#1e3350"/><rect x="5" y="7" width="9" height="1" fill="#1e3350"/><rect x="5" y="12" width="9" height="1" fill="#1e3350"/></svg>
<svg class="a" style="left:391px;top:75px;" width="7" height="4" viewBox="0 0 7 4"><path d="M0.5 0.3H6.5L3.5 3.8Z" fill="#111"/></svg>
<svg class="a" style="left:406px;top:68px;" width="17" height="17" viewBox="0 0 17 17"><path d="M3.5 2V15" stroke="#1f7fd8" stroke-width="1.3"/><path d="M1 4.5L3.5 1L6 4.5Z M1 12.5L3.5 16L6 12.5Z" fill="#1f7fd8"/><rect x="8" y="4" width="8" height="1" fill="#1e3350"/><rect x="8" y="7" width="8" height="1" fill="#1e3350"/><rect x="8" y="10" width="8" height="1" fill="#1e3350"/><rect x="8" y="13" width="7" height="1" fill="#1e3350"/></svg>
<svg class="a" style="left:425px;top:75px;" width="7" height="4" viewBox="0 0 7 4"><path d="M0.5 0.3H6.5L3.5 3.8Z" fill="#111"/></svg>
<div class="a" style="left:317px;top:95px;width:23px;height:22px;background:#cde3f8;border:1px solid #7eb4ea;box-sizing:border-box"></div>
<svg class="a" style="left:322px;top:99px;" width="15" height="14" viewBox="0 0 15 14"><rect x="0" y="1" width="14" height="1" fill="#1e3350"/><rect x="0" y="3" width="10" height="1" fill="#1e3350"/><rect x="0" y="5" width="14" height="1" fill="#1e3350"/><rect x="0" y="7" width="10" height="1" fill="#1e3350"/><rect x="0" y="9" width="14" height="1" fill="#1e3350"/><rect x="0" y="11" width="10" height="1" fill="#1e3350"/></svg>
<svg class="a" style="left:345px;top:99px;" width="15" height="14" viewBox="0 0 15 14"><rect x="0" y="1" width="14" height="1" fill="#1e3350"/><rect x="2" y="3" width="10" height="1" fill="#1e3350"/><rect x="0" y="5" width="14" height="1" fill="#1e3350"/><rect x="2" y="7" width="10" height="1" fill="#1e3350"/><rect x="0" y="9" width="14" height="1" fill="#1e3350"/><rect x="2" y="11" width="10" height="1" fill="#1e3350"/></svg>
<svg class="a" style="left:369px;top:99px;" width="15" height="14" viewBox="0 0 15 14"><rect x="0" y="1" width="14" height="1" fill="#1e3350"/><rect x="4" y="3" width="10" height="1" fill="#1e3350"/><rect x="0" y="5" width="14" height="1" fill="#1e3350"/><rect x="4" y="7" width="10" height="1" fill="#1e3350"/><rect x="0" y="9" width="14" height="1" fill="#1e3350"/><rect x="4" y="11" width="10" height="1" fill="#1e3350"/></svg>
<svg class="a" style="left:392px;top:99px;" width="15" height="14" viewBox="0 0 15 14"><rect x="0" y="1" width="14" height="1" fill="#1e3350"/><rect x="0" y="3" width="14" height="1" fill="#1e3350"/><rect x="0" y="5" width="14" height="1" fill="#1e3350"/><rect x="0" y="7" width="14" height="1" fill="#1e3350"/><rect x="0" y="9" width="14" height="1" fill="#1e3350"/><rect x="0" y="11" width="14" height="1" fill="#1e3350"/></svg>
<svg class="a" style="left:418px;top:98px;" width="14" height="15" viewBox="0 0 14 15"><rect x="4" y="1" width="9" height="1" fill="#1e3350"/><rect x="0" y="4" width="13" height="1" fill="#1e3350"/><rect x="0" y="7" width="5" height="1" fill="#1e3350"/><rect x="0" y="10" width="5" height="1" fill="#1e3350"/><rect x="0" y="13" width="5" height="1" fill="#1e3350"/><rect x="8" y="6" width="6" height="1.2" fill="#1f7fd8"/><rect x="10.6" y="6" width="1.2" height="8.5" fill="#1f7fd8"/><rect x="12.6" y="6" width="1.2" height="8.5" fill="#1f7fd8"/><path d="M10.8 6.2A2.3 2.3 0 0 0 10.8 10.8Z" fill="#1f7fd8"/></svg>
<div class="t " style="left:337.0px;top:127px;width:80px;text-align:center;font-size:11.3px;color:#444;">Абзац</div>
<div class="a" style="left:446px;top:56px;width:46px;height:87px;background:#e9eff6;border:1px solid #c3dcf3;box-sizing:border-box"></div>
<div class="a" style="left:454px;top:61px;width:31px;height:31px;background:#f5f8fb;border:1px solid #9cc4ec;box-sizing:border-box"></div>
<svg class="a" style="left:461px;top:66px;" width="17" height="15" viewBox="0 0 17 15"><defs><linearGradient id="pg43" x1="0" y1="0" x2="0" y2="1"><stop offset="0" stop-color="#4aa0e0"/><stop offset="0.45" stop-color="#cfe8f8"/><stop offset="0.7" stop-color="#3a8a5a"/><stop offset="1" stop-color="#2a70c0"/></linearGradient></defs><rect x="0.5" y="0.5" width="15.5" height="13.5" rx="1" fill="#fff" stroke="#8a8a8a"/><rect x="2.2" y="2.2" width="12" height="10" fill="url(#pg43)"/></svg>
<div class="t " style="left:439.0px;top:94px;width:60px;text-align:center;font-size:11.1px;color:#262626;">Вставка</div>
<svg class="a" style="left:465px;top:114px;" width="7" height="4" viewBox="0 0 7 4"><path d="M0.5 0.3H6.5L3.5 3.8Z" fill="#222"/></svg>
<svg class="a" style="left:498px;top:61px;" width="17" height="15" viewBox="0 0 17 15"><g fill="#3f5575"><path d="M2.5 1.5Q2.5 0.5 3.8 0.5Q5 0.5 5 1.5V4L7 6V13.5Q7 14.5 6 14.5H1.5Q0.5 14.5 0.5 13.5V6L2.5 4Z"/><path d="M12 1.5Q12 0.5 13.2 0.5Q14.5 0.5 14.5 1.5V4L16.5 6V13.5Q16.5 14.5 15.5 14.5H11Q10 14.5 10 13.5V6L12 4Z"/><rect x="6.5" y="5" width="4" height="3"/></g><rect x="1.7" y="8.5" width="4.1" height="5" rx="0.6" fill="#c8dcf0"/><rect x="11.2" y="8.5" width="4.1" height="5" rx="0.6" fill="#c8dcf0"/><path d="M3 1.5V4M12.5 1.5V4" stroke="#8aa0c0" stroke-width="0.8"/></svg>
<div class="t " style="left:518px;top:59px;font-size:11.1px;color:#262626;">Поиск</div>
<svg class="a" style="left:498px;top:83px;" width="18" height="17" viewBox="0 0 18 17"><text x="0.5" y="8.5" font-family="Liberation Serif" font-weight="bold" font-size="9.5" fill="#1e3350">a</text><text x="5.5" y="8.5" font-family="Liberation Serif" font-size="10" fill="#9a9a9a">b</text><path d="M1.5 9.5V12.5H5" fill="none" stroke="#1f7fd8" stroke-width="1.4"/><path d="M4.5 10.8L6.8 12.5L4.5 14.2Z" fill="#1f7fd8"/><text x="6.5" y="15.5" font-family="Liberation Sans" font-weight="bold" font-size="8.5" fill="#1e3350">a</text><text x="11.5" y="15.5" font-family="Liberation Sans" font-weight="bold" font-size="8.5" fill="#2a9a2a">c</text></svg>
<div class="t " style="left:518px;top:81px;font-size:11.1px;color:#262626;">Замена</div>
<svg class="a" style="left:499px;top:106px;" width="16" height="16" viewBox="0 0 16 16"><rect x="0.5" y="0.5" width="14" height="14" fill="none" stroke="#1e3350" stroke-dasharray="1.5 1.5"/><rect x="3" y="3" width="9" height="9" fill="#cfe3f7" stroke="#4a90d9"/></svg>
<div class="t " style="left:518px;top:103px;font-size:10.9px;color:#262626;">Выделить все</div>
<div class="t " style="left:505.0px;top:127px;width:80px;text-align:center;font-size:11.3px;color:#444;">Правка</div>
<div class="a" style="left:0px;top:145px;width:683px;height:30px;background:#c5cfde"></div>
<div class="a" style="left:0px;top:152px;width:683px;height:14px;background:#e3e8ef"></div>
<div class="a" style="left:64px;top:152px;width:553px;height:14px;background:#fff"></div>
<svg class="a" style="left:0px;top:145px;" width="683" height="30" viewBox="0 0 683 30"><rect x="7.3" y="10.8" width="1.3" height="5" fill="#444"/><rect x="16.8" y="13" width="1.3" height="1.6" fill="#444"/><text x="25.9" y="17.8" text-anchor="middle" font-family="Liberation Sans" font-size="12.3" fill="#3a3a3a">1</text><rect x="35.7" y="13" width="1.3" height="1.6" fill="#444"/><rect x="45.1" y="10.8" width="1.3" height="5" fill="#444"/><rect x="54.5" y="13" width="1.3" height="1.6" fill="#444"/><rect x="73.5" y="13" width="1.3" height="1.6" fill="#444"/><rect x="82.9" y="10.8" width="1.3" height="5" fill="#444"/><rect x="92.3" y="13" width="1.3" height="1.6" fill="#444"/><text x="101.5" y="17.8" text-anchor="middle" font-family="Liberation Sans" font-size="12.3" fill="#3a3a3a">1</text><rect x="111.2" y="13" width="1.3" height="1.6" fill="#444"/><rect x="120.7" y="10.8" width="1.3" height="5" fill="#444"/><rect x="130.2" y="13" width="1.3" height="1.6" fill="#444"/><text x="139.3" y="17.8" text-anchor="middle" font-family="Liberation Sans" font-size="12.3" fill="#3a3a3a">2</text><rect x="149.0" y="13" width="1.3" height="1.6" fill="#444"/><rect x="158.5" y="10.8" width="1.3" height="5" fill="#444"/><rect x="167.9" y="13" width="1.3" height="1.6" fill="#444"/><text x="177.1" y="17.8" text-anchor="middle" font-family="Liberation Sans" font-size="12.3" fill="#3a3a3a">3</text><rect x="186.8" y="13" width="1.3" height="1.6" fill="#444"/><rect x="196.3" y="10.8" width="1.3" height="5" fill="#444"/><rect x="205.7" y="13" width="1.3" height="1.6" fill="#444"/><text x="214.9" y="17.8" text-anchor="middle" font-family="Liberation Sans" font-size="12.3" fill="#3a3a3a">4</text><rect x="224.6" y="13" width="1.3" height="1.6" fill="#444"/><rect x="234.1" y="10.8" width="1.3" height="5" fill="#444"/><rect x="243.5" y="13" width="1.3" height="1.6" fill="#444"/><text x="252.7" y="17.8" text-anchor="middle" font-family="Liberation Sans" font-size="12.3" fill="#3a3a3a">5</text><rect x="262.4" y="13" width="1.3" height="1.6" fill="#444"/><rect x="271.9" y="10.8" width="1.3" height="5" fill="#444"/><rect x="281.4" y="13" width="1.3" height="1.6" fill="#444"/><text x="290.5" y="17.8" text-anchor="middle" font-family="Liberation Sans" font-size="12.3" fill="#3a3a3a">6</text><rect x="300.2" y="13" width="1.3" height="1.6" fill="#444"/><rect x="309.7" y="10.8" width="1.3" height="5" fill="#444"/><rect x="319.1" y="13" width="1.3" height="1.6" fill="#444"/><text x="328.3" y="17.8" text-anchor="middle" font-family="Liberation Sans" font-size="12.3" fill="#3a3a3a">7</text><rect x="338.0" y="13" width="1.3" height="1.6" fill="#444"/><rect x="347.5" y="10.8" width="1.3" height="5" fill="#444"/><rect x="356.9" y="13" width="1.3" height="1.6" fill="#444"/><text x="366.1" y="17.8" text-anchor="middle" font-family="Liberation Sans" font-size="12.3" fill="#3a3a3a">8</text><rect x="375.8" y="13" width="1.3" height="1.6" fill="#444"/><rect x="385.3" y="10.8" width="1.3" height="5" fill="#444"/><rect x="394.8" y="13" width="1.3" height="1.6" fill="#444"/><text x="403.9" y="17.8" text-anchor="middle" font-family="Liberation Sans" font-size="12.3" fill="#3a3a3a">9</text><rect x="413.6" y="13" width="1.3" height="1.6" fill="#444"/><rect x="423.1" y="10.8" width="1.3" height="5" fill="#444"/><rect x="432.6" y="13" width="1.3" height="1.6" fill="#444"/><text x="441.7" y="17.8" text-anchor="middle" font-family="Liberation Sans" font-size="12.3" fill="#3a3a3a">10</text><rect x="451.4" y="13" width="1.3" height="1.6" fill="#444"/><rect x="460.9" y="10.8" width="1.3" height="5" fill="#444"/><rect x="470.4" y="13" width="1.3" height="1.6" fill="#444"/><text x="479.5" y="17.8" text-anchor="middle" font-family="Liberation Sans" font-size="12.3" fill="#3a3a3a">11</text><rect x="489.2" y="13" width="1.3" height="1.6" fill="#444"/><rect x="498.7" y="10.8" width="1.3" height="5" fill="#444"/><rect x="508.1" y="13" width="1.3" height="1.6" fill="#444"/><text x="517.3" y="17.8" text-anchor="middle" font-family="Liberation Sans" font-size="12.3" fill="#3a3a3a">12</text><rect x="527.0" y="13" width="1.3" height="1.6" fill="#444"/><rect x="536.5" y="10.8" width="1.3" height="5" fill="#444"/><rect x="545.9" y="13" width="1.3" height="1.6" fill="#444"/><text x="555.1" y="17.8" text-anchor="middle" font-family="Liberation Sans" font-size="12.3" fill="#3a3a3a">13</text><rect x="564.9" y="13" width="1.3" height="1.6" fill="#444"/><rect x="574.3" y="10.8" width="1.3" height="5" fill="#444"/><rect x="583.8" y="13" width="1.3" height="1.6" fill="#444"/><text x="592.9" y="17.8" text-anchor="middle" font-family="Liberation Sans" font-size="12.3" fill="#3a3a3a">14</text><rect x="602.6" y="13" width="1.3" height="1.6" fill="#444"/><rect x="612.1" y="10.8" width="1.3" height="5" fill="#444"/><rect x="621.5" y="13" width="1.3" height="1.6" fill="#444"/><text x="630.7" y="17.8" text-anchor="middle" font-family="Liberation Sans" font-size="12.3" fill="#3a3a3a">15</text><rect x="640.5" y="13" width="1.3" height="1.6" fill="#444"/><rect x="649.9" y="10.8" width="1.3" height="5" fill="#444"/><rect x="659.4" y="13" width="1.3" height="1.6" fill="#444"/><text x="668.5" y="17.8" text-anchor="middle" font-family="Liberation Sans" font-size="12.3" fill="#3a3a3a">16</text><rect x="678.2" y="13" width="1.3" height="1.6" fill="#444"/><rect x="112.5" y="22" width="1" height="2" fill="#8f9bb0"/><rect x="160.5" y="22" width="1" height="2" fill="#8f9bb0"/><rect x="208.5" y="22" width="1" height="2" fill="#8f9bb0"/><rect x="256.5" y="22" width="1" height="2" fill="#8f9bb0"/><rect x="304.5" y="22" width="1" height="2" fill="#8f9bb0"/><rect x="352.5" y="22" width="1" height="2" fill="#8f9bb0"/><rect x="400.5" y="22" width="1" height="2" fill="#8f9bb0"/><rect x="448.5" y="22" width="1" height="2" fill="#8f9bb0"/><rect x="496.5" y="22" width="1" height="2" fill="#8f9bb0"/><rect x="544.5" y="22" width="1" height="2" fill="#8f9bb0"/><rect x="592.5" y="22" width="1" height="2" fill="#8f9bb0"/></svg>
<svg class="a" style="left:58px;top:150px;" width="11" height="24" viewBox="0 0 11 24"><path d="M1 1H10L5.5 8.5Z M1 16H10L5.5 8.5Z" fill="#fff" stroke="#3f5775"/><rect x="1" y="16" width="9" height="7" fill="#fff" stroke="#3f5775"/></svg>
<svg class="a" style="left:612px;top:151px;" width="11" height="17" viewBox="0 0 11 17"><path d="M5.5 0V8" stroke="#5a6f8a" stroke-width="1"/><path d="M1 15.5V12L5.5 8L10 12V15.5Z" fill="#fff" stroke="#3f5775" stroke-width="1.1"/><rect x="1.5" y="12.5" width="8" height="2.5" fill="#dfe6ee"/></svg>
<pre class="doc" style="left:63px;top:191px">begin
  ResultURL:=GetURLBase+&#x27;z&#x27;+inttostr(getz)+&#x27;/&#x27;+inttostr(getx
div 1024)+&#x27;/x&#x27;+inttostr(getx)+&#x27;/&#x27;+inttostr(gety div
1024)+&#x27;/y&#x27;+inttostr(gety)+&#x27;.jpg&#x27;;
end.</pre>
<div class="a" style="left:0px;top:653px;width:683px;height:26px;background:#f0f0f0;border-top:1px solid #d7d7d7;box-sizing:border-box"></div>
</div>
<div class="a" style="left:830px;top:93px;width:563px;height:478px;background:#f0f0f0;border:1px solid #8a8a8a;box-sizing:border-box;overflow:hidden;box-shadow:0 2px 12px 2px rgba(0,0,0,0.3)">
<div class="a" style="left:0px;top:0px;width:561px;height:30px;background:#fff"></div>
<svg class="a" style="left:8px;top:7px;" width="16" height="15" viewBox="0 0 16 15"><path d="M6.8 1.6Q8 0 9.2 1.6L15 11.5Q16 13.6 13.6 13.6H2.4Q0 13.6 1 11.5Z" fill="#fff" stroke="#111" stroke-width="1.1" stroke-dasharray="1.3 0.7"/><circle cx="8" cy="9" r="4.6" fill="#2d6ff0"/><path d="M5 7Q8 5 11 7L10 12Q8 13.5 6 12Z" fill="#0b2a9a"/><rect x="7.4" y="7.5" width="1.4" height="3" fill="#b09040"/><path d="M4 9Q5 6 7 6" stroke="#fff" stroke-width="0.8" fill="none" opacity="0.7"/></svg>
<div class="t " style="left:29px;top:6px;font-size:11.7px;color:#999;">Параметры карты: Немецкий Генштаб 1942 (1:30000)</div>
<div class="a" style="left:442px;top:14px;width:10px;height:1px;background:#777"></div>
<div class="a" style="left:487px;top:9px;width:10px;height:10px;border:1px solid #777;box-sizing:border-box"></div>
<svg class="a" style="left:533px;top:9px;" width="11" height="11" viewBox="0 0 11 11"><path d="M0.5 0.5L10.5 10.5M10.5 0.5L0.5 10.5" stroke="#777" stroke-width="1.1"/></svg>
<div class="a" style="left:0px;top:30px;width:154px;height:400px;background:#fff;border:1px solid #828790;border-left:none;box-sizing:border-box"></div>
<div class="a" style="left:22px;top:48px;width:58px;height:16px;background:#d9d9d9"></div>
<div class="t " style="left:6px;top:30px;font-size:11.1px;color:#000;">Параметры</div>
<div class="t " style="left:25px;top:46px;font-size:11.1px;color:#000;">Интернет</div>
<div class="t " style="left:25px;top:62px;font-size:11.1px;color:#000;">Кэш и прочее</div>
<div class="t " style="left:6px;top:78px;font-size:11.1px;color:#000;">Листинги</div>
<div class="t " style="left:25px;top:94px;font-size:11.1px;color:#000;">Params.txt</div>
<div class="t " style="left:25px;top:110px;font-size:11.1px;color:#000;">GetUrlScript.txt</div>
<div class="t " style="left:25px;top:126px;font-size:11.1px;color:#000;">Info.txt</div>
<svg class="a" style="left:-831px;top:-94px;" width="1000" height="300" viewBox="0 0 1000 300"><rect x="845" y="142" width="1" height="1" fill="#8a8a8a"/><rect x="845" y="144" width="1" height="1" fill="#8a8a8a"/><rect x="845" y="146" width="1" height="1" fill="#8a8a8a"/><rect x="845" y="148" width="1" height="1" fill="#8a8a8a"/><rect x="845" y="150" width="1" height="1" fill="#8a8a8a"/><rect x="845" y="152" width="1" height="1" fill="#8a8a8a"/><rect x="845" y="154" width="1" height="1" fill="#8a8a8a"/><rect x="845" y="156" width="1" height="1" fill="#8a8a8a"/><rect x="845" y="158" width="1" height="1" fill="#8a8a8a"/><rect x="845" y="160" width="1" height="1" fill="#8a8a8a"/><rect x="845" y="162" width="1" height="1" fill="#8a8a8a"/><rect x="845" y="164" width="1" height="1" fill="#8a8a8a"/><rect x="845" y="166" width="1" height="1" fill="#8a8a8a"/><rect x="847" y="150" width="1" height="1" fill="#8a8a8a"/><rect x="849" y="150" width="1" height="1" fill="#8a8a8a"/><rect x="851" y="150" width="1" height="1" fill="#8a8a8a"/><rect x="853" y="150" width="1" height="1" fill="#8a8a8a"/><rect x="855" y="150" width="1" height="1" fill="#8a8a8a"/><rect x="847" y="166" width="1" height="1" fill="#8a8a8a"/><rect x="849" y="166" width="1" height="1" fill="#8a8a8a"/><rect x="851" y="166" width="1" height="1" fill="#8a8a8a"/><rect x="853" y="166" width="1" height="1" fill="#8a8a8a"/><rect x="855" y="166" width="1" height="1" fill="#8a8a8a"/><rect x="845" y="190" width="1" height="1" fill="#8a8a8a"/><rect x="845" y="192" width="1" height="1" fill="#8a8a8a"/><rect x="845" y="194" width="1" height="1" fill="#8a8a8a"/><rect x="845" y="196" width="1" height="1" fill="#8a8a8a"/><rect x="845" y="198" width="1" height="1" fill="#8a8a8a"/><rect x="845" y="200" width="1" height="1" fill="#8a8a8a"/><rect x="845" y="202" width="1" height="1" fill="#8a8a8a"/><rect x="845" y="204" width="1" height="1" fill="#8a8a8a"/><rect x="845" y="206" width="1" height="1" fill="#8a8a8a"/><rect x="845" y="208" width="1" height="1" fill="#8a8a8a"/><rect x="845" y="210" width="1" height="1" fill="#8a8a8a"/><rect x="845" y="212" width="1" height="1" fill="#8a8a8a"/><rect x="845" y="214" width="1" height="1" fill="#8a8a8a"/><rect x="845" y="216" width="1" height="1" fill="#8a8a8a"/><rect x="845" y="218" width="1" height="1" fill="#8a8a8a"/><rect x="845" y="220" width="1" height="1" fill="#8a8a8a"/><rect x="845" y="222" width="1" height="1" fill="#8a8a8a"/><rect x="845" y="224" width="1" height="1" fill="#8a8a8a"/><rect x="845" y="226" width="1" height="1" fill="#8a8a8a"/><rect x="845" y="228" width="1" height="1" fill="#8a8a8a"/><rect x="845" y="230" width="1" height="1" fill="#8a8a8a"/><rect x="847" y="198" width="1" height="1" fill="#8a8a8a"/><rect x="849" y="198" width="1" height="1" fill="#8a8a8a"/><rect x="851" y="198" width="1" height="1" fill="#8a8a8a"/><rect x="853" y="198" width="1" height="1" fill="#8a8a8a"/><rect x="855" y="198" width="1" height="1" fill="#8a8a8a"/><rect x="847" y="214" width="1" height="1" fill="#8a8a8a"/><rect x="849" y="214" width="1" height="1" fill="#8a8a8a"/><rect x="851" y="214" width="1" height="1" fill="#8a8a8a"/><rect x="853" y="214" width="1" height="1" fill="#8a8a8a"/><rect x="855" y="214" width="1" height="1" fill="#8a8a8a"/><rect x="847" y="230" width="1" height="1" fill="#8a8a8a"/><rect x="849" y="230" width="1" height="1" fill="#8a8a8a"/><rect x="851" y="230" width="1" height="1" fill="#8a8a8a"/><rect x="853" y="230" width="1" height="1" fill="#8a8a8a"/><rect x="855" y="230" width="1" height="1" fill="#8a8a8a"/></svg>
<div class="t " style="left:165px;top:36px;font-size:10.7px;color:#000;">Базовая часть URL:</div>
<div class="a" style="left:166px;top:53px;width:358px;height:44px;background:#fff;border:1px solid #7a7a7a;box-sizing:border-box"></div>
<div class="t " style="left:171px;top:53px;font-size:11.4px;color:#000;">http://91.237.82.95:8088/pub/historic/1942_osteuropa/</div>
<svg class="a" style="left:506px;top:54px;" width="16" height="42" viewBox="0 0 16 42"><rect width="16" height="42" fill="#f0f0f0"/><path d="M4 12L8 8L12 12" fill="none" stroke="#b6b6b6" stroke-width="1.3"/><path d="M4 30.5L8 34.5L12 30.5" fill="none" stroke="#b6b6b6" stroke-width="1.3"/></svg>
<div class="a" style="left:531px;top:57px;width:19px;height:19px;background:#e1e1e1;border:1px solid #adadad;box-sizing:border-box"></div><div class="t " style="left:531.5px;top:56.5px;width:19px;text-align:center;font-size:12px;color:#000;letter-spacing:0.5px">&lt;&gt;</div>
<div class="t " style="left:166px;top:103px;font-size:10.9px;color:#000;">Дополнительные HTTP заголовки:</div>
<div class="a" style="left:166px;top:125px;width:358px;height:42px;background:#fff;border:1px solid #7a7a7a;box-sizing:border-box"></div>
<svg class="a" style="left:506px;top:126px;" width="16" height="40" viewBox="0 0 16 40"><rect width="16" height="40" fill="#f0f0f0"/><path d="M4 12L8 8L12 12" fill="none" stroke="#b6b6b6" stroke-width="1.3"/><path d="M4 28.5L8 32.5L12 28.5" fill="none" stroke="#b6b6b6" stroke-width="1.3"/></svg>
<div class="a" style="left:531px;top:126px;width:19px;height:19px;background:#e1e1e1;border:1px solid #adadad;box-sizing:border-box"></div><div class="t " style="left:531.5px;top:125.5px;width:19px;text-align:center;font-size:12px;color:#000;letter-spacing:0.5px">&lt;&gt;</div>
<div class="t " style="left:165px;top:173px;font-size:10.9px;color:#000;">Версия карты:</div>
<div class="a" style="left:166px;top:195px;width:358px;height:20px;background:#fff;border:1px solid #7a7a7a;box-sizing:border-box"></div>
<div class="a" style="left:531px;top:196px;width:19px;height:18px;background:#e1e1e1;border:1px solid #adadad;box-sizing:border-box"></div><div class="t " style="left:531.5px;top:195.0px;width:19px;text-align:center;font-size:12px;color:#000;letter-spacing:0.5px">&lt;&gt;</div>
<div class="t " style="left:165px;top:224px;font-size:10.9px;color:#000;">Пауза, мс:</div>
<div class="a" style="left:225px;top:224px;width:75px;height:21px;background:#fff;border:1px solid #7a7a7a;box-sizing:border-box"></div>
<div class="t " style="left:228px;top:224px;font-size:11px;color:#000;">0</div>
<svg class="a" style="left:282px;top:226px;" width="16" height="17" viewBox="0 0 16 17"><rect x="0.5" y="0.5" width="15" height="8" fill="#e6e6e6" stroke="#adadad"/><rect x="0.5" y="8.5" width="15" height="8" fill="#e6e6e6" stroke="#adadad"/><path d="M4.5 6.5L8 2.5L11.5 6.5Z M4.5 10.5L8 14.5L11.5 10.5Z" fill="#000"/></svg>
<div class="a" style="left:307px;top:225px;width:19px;height:18px;background:#e1e1e1;border:1px solid #adadad;box-sizing:border-box"></div><div class="t " style="left:307.5px;top:224.0px;width:19px;text-align:center;font-size:12px;color:#000;letter-spacing:0.5px">&lt;&gt;</div>
<div class="t " style="left:93px;top:257px;font-size:10.9px;color:#000;width:300px;text-align:right">Число параллельных http(s)-запросов:</div>
<div class="a" style="left:400px;top:257px;width:75px;height:22px;background:#fff;border:1px solid #7a7a7a;box-sizing:border-box"></div>
<div class="t " style="left:403px;top:257px;font-size:11px;color:#000;">1</div>
<svg class="a" style="left:457px;top:259px;" width="16" height="17" viewBox="0 0 16 17"><rect x="0.5" y="0.5" width="15" height="8" fill="#e6e6e6" stroke="#adadad"/><rect x="0.5" y="8.5" width="15" height="8" fill="#e6e6e6" stroke="#adadad"/><path d="M4.5 6.5L8 2.5L11.5 6.5Z M4.5 10.5L8 14.5L11.5 10.5Z" fill="#000"/></svg>
<div class="a" style="left:482px;top:258px;width:19px;height:19px;background:#e1e1e1;border:1px solid #adadad;box-sizing:border-box"></div><div class="t " style="left:482.5px;top:257.5px;width:19px;text-align:center;font-size:12px;color:#000;letter-spacing:0.5px">&lt;&gt;</div>
<div class="t " style="left:-29px;top:285px;font-size:10.9px;color:#000;width:300px;text-align:right">Комментарии:</div>
<div class="a" style="left:166px;top:304px;width:389px;height:48px;background:#fff;border:1px solid #7a7a7a;box-sizing:border-box"></div>
<div class="t " style="left:-10px;top:304px;font-size:10.9px;color:#000;width:300px;text-align:right">Разрешено</div>
<div class="t " style="left:-2px;top:394px;font-size:10.9px;color:#000;width:300px;text-align:right">Разрешить скачивание</div>
<div class="t " style="left:2px;top:419px;font-size:10.9px;color:#000;width:300px;text-align:right">1942_osteuropa.zmp</div>
<div class="a" style="left:154px;top:439px;width:407px;height:1px;background:#d5d5d5"></div>
<div class="a" style="left:400px;top:448px;width:73px;height:21px;background:#e1e1e1;border:1px solid #adadad;box-sizing:border-box"></div>
<div class="t " style="left:399.5px;top:449px;width:73px;text-align:center;font-size:11px;color:#000;">Ok</div>
<div class="a" style="left:481px;top:448px;width:73px;height:21px;background:#e1e1e1;border:1px solid #adadad;box-sizing:border-box"></div>
<div class="t " style="left:480.5px;top:449px;width:73px;text-align:center;font-size:11px;color:#000;">Отменить</div>
</div>
<div class="a" style="left:410px;top:346px;width:685px;height:560px;background:#fff;border:1px solid #1883d7;box-sizing:border-box;overflow:hidden;box-shadow:0 0 14px 2px rgba(0,0,0,0.35)">
<svg class="a" style="left:8px;top:5px;" width="17" height="18" viewBox="0 0 17 18"><rect x="2.5" y="1" width="12" height="13" fill="#e6f0fa" stroke="#4a82b8"/><rect x="2.5" y="1" width="12" height="1.6" fill="#3a72aa"/><path d="M4.3 8.5L6.3 3.8L8.3 8.5M5 7H7.6" stroke="#f08a24" stroke-width="1.3" fill="none"/><path d="M9.5 4.5H13M9.5 6.5H13" stroke="#3a82d0" stroke-width="0.9"/><path d="M4.5 10.5H13M4.5 12.3H13" stroke="#8a9ab0" stroke-width="0.7"/><path d="M1 14.5H16L15 16.5H2Z" fill="#d6e6f4" stroke="#4a82b8" stroke-width="0.8"/></svg>
<div class="a" style="left:31px;top:8px;width:1px;height:13px;background:#9a9a9a"></div>
<svg class="a" style="left:41px;top:8px;" width="15" height="15" viewBox="0 0 15 15"><rect x="0.5" y="0.5" width="14" height="14" rx="1" fill="#8a52b8"/><rect x="3" y="1" width="9" height="5" fill="#e9e3f3"/><rect x="4" y="9.5" width="7" height="5" fill="#5c5c5c"/><rect x="8.5" y="10.5" width="1.5" height="3" fill="#ccc"/></svg>
<svg class="a" style="left:64px;top:7px;" width="14" height="16" viewBox="0 0 14 16"><path d="M4.5 5H7.5A4.3 4.3 0 0 1 7.5 13.6H6" fill="none" stroke="#a8bbd2" stroke-width="3" stroke-linecap="round"/><path d="M0.3 5L5.5 0.8V9.2Z" fill="#a8bbd2"/></svg>
<svg class="a" style="left:86px;top:7px;" width="14" height="16" viewBox="0 0 14 16"><path d="M9.5 5H6.5A4.3 4.3 0 0 0 6.5 13.6H8" fill="none" stroke="#a8bbd2" stroke-width="3" stroke-linecap="round"/><path d="M13.7 5L8.5 0.8V9.2Z" fill="#a8bbd2"/></svg>
<svg class="a" style="left:107px;top:12px;" width="9" height="8" viewBox="0 0 9 8"><rect x="0.5" y="0" width="8" height="1.3" fill="#111"/><path d="M0.5 3H8.5L4.5 7.5Z" fill="#111"/></svg>
<div class="a" style="left:123px;top:8px;width:1px;height:13px;background:#9a9a9a"></div>
<div class="t " style="left:131px;top:5px;font-size:11.7px;color:#000;">params.txt - WordPad</div>
<div class="a" style="left:564px;top:14px;width:10px;height:1px;background:#000"></div>
<div class="a" style="left:609px;top:9px;width:10px;height:10px;border:1px solid #000;box-sizing:border-box"></div>
<svg class="a" style="left:654px;top:9px;" width="11" height="11" viewBox="0 0 11 11"><path d="M0.5 0.5L10.5 10.5M10.5 0.5L0.5 10.5" stroke="#000" stroke-width="1.1"/></svg>
<div class="a" style="left:0px;top:30px;width:56px;height:23px;background:#1979ca"></div>
<div class="t " style="left:0.0px;top:32px;width:56px;text-align:center;font-size:10.8px;color:#fff;">Файл</div>
<div class="a" style="left:56px;top:30px;width:70px;height:24px;background:#f5f6f7;border:1px solid #dadbdc;border-bottom:none;box-sizing:border-box"></div>
<div class="t " style="left:56.0px;top:32px;width:70px;text-align:center;font-size:10.9px;color:#262626;">Главная</div>
<div class="t " style="left:141px;top:32px;font-size:10.9px;color:#262626;">Вид</div>
<svg class="a" style="left:646px;top:38px;" width="9" height="6" viewBox="0 0 9 6"><path d="M0.5 5.5L4.5 1L8.5 5.5" fill="none" stroke="#9a9a9a" stroke-width="1.1"/></svg>
<svg class="a" style="left:665px;top:34px;" width="15" height="15" viewBox="0 0 15 15"><circle cx="7.5" cy="7.5" r="7" fill="#1a73c8"/><text x="7.5" y="11.5" text-anchor="middle" font-family="Liberation Sans" font-weight="bold" font-size="11" fill="#fff">?</text></svg>
<div class="a" style="left:0px;top:53px;width:683px;height:92px;background:#f5f6f7;border-top:1px solid #dadbdc;box-sizing:border-box"></div>
<div class="a" style="left:89px;top:56px;width:1px;height:86px;background:#e2e3e4"></div>
<div class="a" style="left:312px;top:56px;width:1px;height:86px;background:#e2e3e4"></div>
<div class="a" style="left:443px;top:56px;width:1px;height:86px;background:#e2e3e4"></div>
<div class="a" style="left:599px;top:56px;width:1px;height:86px;background:#e2e3e4"></div>
<svg class="a" style="left:20px;top:59px;" width="26" height="33" viewBox="0 0 26 33"><rect x="1" y="3" width="24" height="29" rx="2" fill="#b98a4e" stroke="#8a6232"/><rect x="4" y="6" width="18" height="23" fill="#fbfbfb"/><rect x="5" y="9" width="16" height="1" fill="#b8c8d8"/><rect x="5" y="12" width="16" height="1" fill="#b8c8d8"/><rect x="5" y="15" width="16" height="1" fill="#b8c8d8"/><rect x="5" y="18" width="16" height="1" fill="#b8c8d8"/><rect x="5" y="21" width="16" height="1" fill="#b8c8d8"/><rect x="5" y="24" width="16" height="1" fill="#b8c8d8"/><path d="M8 5L13 1L18 5Z" fill="#ddd" stroke="#777" stroke-width="0.8"/></svg>
<div class="t " style="left:-7.0px;top:94px;width:80px;text-align:center;font-size:11.1px;color:#262626;">Вставить</div>
<svg class="a" style="left:30px;top:114px;" width="7" height="4" viewBox="0 0 7 4"><path d="M0.5 0.3H6.5L3.5 3.8Z" fill="#222"/></svg>
<svg class="a" style="left:64px;top:61px;" width="11" height="16" viewBox="0 0 11 16"><path d="M3 1L7 10M8 1L4 10" stroke="#a8b8cc" stroke-width="1.4"/><circle cx="3" cy="12.5" r="2.3" fill="none" stroke="#a8b8cc" stroke-width="1.2"/><circle cx="8" cy="12.5" r="2.3" fill="none" stroke="#a8b8cc" stroke-width="1.2"/></svg>
<svg class="a" style="left:62px;top:83px;" width="16" height="17" viewBox="0 0 16 17"><path d="M0.5 0.5H7L9.5 3V12H0.5Z" fill="#fff" stroke="#b0c0d4"/><path d="M5.5 4.5H12L14.5 7V16H5.5Z" fill="#fff" stroke="#b0c0d4"/><path d="M7 9H13M7 11H13M7 13H13" stroke="#b0c0d4"/></svg>
<div class="t " style="left:-5.0px;top:127px;width:100px;text-align:center;font-size:11.3px;color:#444;">Буфер обмена</div>
<div class="a" style="left:94px;top:66px;width:122px;height:22px;background:#fff;border:1px solid #abbad0;box-sizing:border-box"></div>
<div class="a" style="left:215px;top:66px;width:44px;height:22px;background:#fff;border:1px solid #abbad0;box-sizing:border-box"></div>
<div class="t " style="left:98px;top:67px;font-size:11.4px;color:#1a1a1a;">Courier New</div>
<div class="t " style="left:219px;top:67px;font-size:11.4px;color:#1a1a1a;">11</div>
<svg class="a" style="left:204px;top:76px;" width="7" height="4" viewBox="0 0 7 4"><path d="M0.5 0.3H6.5L3.5 3.8Z" fill="#111"/></svg>
<svg class="a" style="left:247px;top:76px;" width="7" height="4" viewBox="0 0 7 4"><path d="M0.5 0.3H6.5L3.5 3.8Z" fill="#111"/></svg>
<svg class="a" style="left:265px;top:68px;" width="16" height="16" viewBox="0 0 16 16"><text x="0" y="15" font-family="Liberation Serif" font-weight="bold" font-size="16" fill="#1f3f6a">A</text><path d="M11 3H16L13.5 0Z" fill="#2b7fd6"/></svg>
<svg class="a" style="left:288px;top:69px;" width="15" height="15" viewBox="0 0 15 15"><text x="0" y="14" font-family="Liberation Serif" font-weight="bold" font-size="12" fill="#1f3f6a">A</text><path d="M9 1H14L11.5 4Z" fill="#2b7fd6"/></svg>
<svg class="a" style="left:98px;top:98px;" width="17" height="14" viewBox="0 0 17 14"><text x="0" y="12" font-family="Liberation Serif" font-weight="bold" font-size="15" fill="#1f3f6a">Ж</text></svg>
<svg class="a" style="left:122px;top:98px;" width="14" height="14" viewBox="0 0 14 14"><text x="0" y="12" font-family="Liberation Serif" font-style="italic" font-size="15" fill="#1f3f6a">К</text></svg>
<svg class="a" style="left:147px;top:97px;" width="13" height="16" viewBox="0 0 13 16"><text x="1" y="11" font-family="Liberation Serif" font-size="14" fill="#1f3f6a">Ч</text><rect x="1" y="13" width="10" height="1.4" fill="#1f3f6a"/></svg>
<svg class="a" style="left:168px;top:100px;" width="18" height="12" viewBox="0 0 18 12"><text x="0" y="10" font-family="Liberation Serif" font-weight="bold" font-size="11" fill="#1f3f6a">abc</text><rect x="0" y="6" width="17" height="1.2" fill="#1f3f6a"/></svg>
<svg class="a" style="left:193px;top:98px;" width="15" height="14" viewBox="0 0 15 14"><path d="M1 2.5L7 9.5M7 2.5L1 9.5" stroke="#1f3f6a" stroke-width="2"/><text x="8.3" y="12.5" font-family="Liberation Sans" font-weight="bold" font-size="7" fill="#2b7fd6">2</text></svg>
<svg class="a" style="left:217px;top:98px;" width="15" height="14" viewBox="0 0 15 14"><path d="M1 5L7 12M7 5L1 12" stroke="#1f3f6a" stroke-width="2"/><text x="8.3" y="6.5" font-family="Liberation Sans" font-weight="bold" font-size="7" fill="#2b7fd6">2</text></svg>
<svg class="a" style="left:241px;top:98px;" width="18" height="17" viewBox="0 0 18 17"><text x="2" y="11" font-family="Liberation Serif" font-weight="bold" font-size="14" fill="#1f3f6a">A</text><rect x="0" y="11" width="16" height="4" fill="#000"/></svg>
<svg class="a" style="left:262px;top:105px;" width="7" height="4" viewBox="0 0 7 4"><path d="M0.5 0.3H6.5L3.5 3.8Z" fill="#111"/></svg>
<svg class="a" style="left:274px;top:98px;" width="18" height="17" viewBox="0 0 18 17"><path d="M5 10L12 2L15 5L8 12Z" fill="#dce8f5" stroke="#5f7fa8"/><path d="M4 11L5 10L8 12L6 13Z" fill="#e8c070"/><rect x="0.5" y="12.5" width="15" height="3" fill="#fff" stroke="#9ab"/></svg>
<svg class="a" style="left:295px;top:105px;" width="7" height="4" viewBox="0 0 7 4"><path d="M0.5 0.3H6.5L3.5 3.8Z" fill="#111"/></svg>
<div class="t " style="left:159.0px;top:127px;width:80px;text-align:center;font-size:11.3px;color:#444;">Шрифт</div>
<svg class="a" style="left:321px;top:68px;" width="18" height="17" viewBox="0 0 18 17"><rect x="1" y="3" width="4" height="1" fill="#1e3350"/><rect x="6" y="3" width="10" height="1" fill="#1e3350"/><rect x="6" y="5" width="10" height="2" fill="#1e3350"/><rect x="6" y="8" width="6" height="2" fill="#1e3350"/><rect x="1" y="11" width="4" height="1" fill="#1e3350"/><rect x="6" y="11" width="10" height="1" fill="#1e3350"/><rect x="1" y="13" width="4" height="1" fill="#1e3350"/><rect x="6" y="13" width="2" height="1" fill="#1e3350"/><rect x="5.5" y="0" width="1" height="1" fill="#1e3350"/><rect x="5.5" y="2" width="1" height="1" fill="#1e3350"/><rect x="5.5" y="15" width="1" height="1" fill="#1e3350"/><path d="M0 7L4 3.8V10.2Z" fill="#1f7fd8"/><rect x="3.5" y="6.3" width="3" height="1.6" fill="#1f7fd8"/></svg>
<svg class="a" style="left:343px;top:68px;" width="18" height="17" viewBox="0 0 18 17"><rect x="1" y="3" width="4" height="1" fill="#1e3350"/><rect x="6" y="3" width="10" height="1" fill="#1e3350"/><rect x="6" y="5" width="10" height="2" fill="#1e3350"/><rect x="6" y="8" width="6" height="2" fill="#1e3350"/><rect x="1" y="11" width="4" height="1" fill="#1e3350"/><rect x="6" y="11" width="10" height="1" fill="#1e3350"/><rect x="1" y="13" width="4" height="1" fill="#1e3350"/><rect x="6" y="13" width="2" height="1" fill="#1e3350"/><rect x="5.5" y="0" width="1" height="1" fill="#1e3350"/><rect x="5.5" y="2" width="1" height="1" fill="#1e3350"/><rect x="5.5" y="15" width="1" height="1" fill="#1e3350"/><path d="M6.5 7L2.5 3.8V10.2Z" fill="#1f7fd8"/><rect x="0" y="6.3" width="3" height="1.6" fill="#1f7fd8"/></svg>
<svg class="a" style="left:369px;top:69px;" width="15" height="14" viewBox="0 0 15 14"><circle cx="2" cy="2.5" r="1.5" fill="#1f7fd8"/><circle cx="2" cy="7.5" r="1.5" fill="#1f7fd8"/><circle cx="2" cy="12.5" r="1.5" fill="#1f7fd8"/><rect x="5" y="2" width="9" height="1" fill="#1e3350"/><rect x="5" y="7" width="9" height="1" fill="#1e3350"/><rect x="5" y="12" width="9" height="1" fill="#1e3350"/></svg>
<svg class="a" style="left:391px;top:75px;" width="7" height="4" viewBox="0 0 7 4"><path d="M0.5 0.3H6.5L3.5 3.8Z" fill="#111"/></svg>
<svg class="a" style="left:406px;top:68px;" width="17" height="17" viewBox="0 0 17 17"><path d="M3.5 2V15" stroke="#1f7fd8" stroke-width="1.3"/><path d="M1 4.5L3.5 1L6 4.5Z M1 12.5L3.5 16L6 12.5Z" fill="#1f7fd8"/><rect x="8" y="4" width="8" height="1" fill="#1e3350"/><rect x="8" y="7" width="8" height="1" fill="#1e3350"/><rect x="8" y="10" width="8" height="1" fill="#1e3350"/><rect x="8" y="13" width="7" height="1" fill="#1e3350"/></svg>
<svg class="a" style="left:425px;top:75px;" width="7" height="4" viewBox="0 0 7 4"><path d="M0.5 0.3H6.5L3.5 3.8Z" fill="#111"/></svg>
<div class="a" style="left:317px;top:95px;width:23px;height:22px;background:#cde3f8;border:1px solid #7eb4ea;box-sizing:border-box"></div>
<svg class="a" style="left:322px;top:99px;" width="15" height="14" viewBox="0 0 15 14"><rect x="0" y="1" width="14" height="1" fill="#1e3350"/><rect x="0" y="3" width="10" height="1" fill="#1e3350"/><rect x="0" y="5" width="14" height="1" fill="#1e3350"/><rect x="0" y="7" width="10" height="1" fill="#1e3350"/><rect x="0" y="9" width="14" height="1" fill="#1e3350"/><rect x="0" y="11" width="10" height="1" fill="#1e3350"/></svg>
<svg class="a" style="left:345px;top:99px;" width="15" height="14" viewBox="0 0 15 14"><rect x="0" y="1" width="14" height="1" fill="#1e3350"/><rect x="2" y="3" width="10" height="1" fill="#1e3350"/><rect x="0" y="5" width="14" height="1" fill="#1e3350"/><rect x="2" y="7" width="10" height="1" fill="#1e3350"/><rect x="0" y="9" width="14" height="1" fill="#1e3350"/><rect x="2" y="11" width="10" height="1" fill="#1e3350"/></svg>
<svg class="a" style="left:369px;top:99px;" width="15" height="14" viewBox="0 0 15 14"><rect x="0" y="1" width="14" height="1" fill="#1e3350"/><rect x="4" y="3" width="10" height="1" fill="#1e3350"/><rect x="0" y="5" width="14" height="1" fill="#1e3350"/><rect x="4" y="7" width="10" height="1" fill="#1e3350"/><rect x="0" y="9" width="14" height="1" fill="#1e3350"/><rect x="4" y="11" width="10" height="1" fill="#1e3350"/></svg>
<svg class="a" style="left:392px;top:99px;" width="15" height="14" viewBox="0 0 15 14"><rect x="0" y="1" width="14" height="1" fill="#1e3350"/><rect x="0" y="3" width="14" height="1" fill="#1e3350"/><rect x="0" y="5" width="14" height="1" fill="#1e3350"/><rect x="0" y="7" width="14" height="1" fill="#1e3350"/><rect x="0" y="9" width="14" height="1" fill="#1e3350"/><rect x="0" y="11" width="14" height="1" fill="#1e3350"/></svg>
<svg class="a" style="left:418px;top:98px;" width="14" height="15" viewBox="0 0 14 15"><rect x="4" y="1" width="9" height="1" fill="#1e3350"/><rect x="0" y="4" width="13" height="1" fill="#1e3350"/><rect x="0" y="7" width="5" height="1" fill="#1e3350"/><rect x="0" y="10" width="5" height="1" fill="#1e3350"/><rect x="0" y="13" width="5" height="1" fill="#1e3350"/><rect x="8" y="6" width="6" height="1.2" fill="#1f7fd8"/><rect x="10.6" y="6" width="1.2" height="8.5" fill="#1f7fd8"/><rect x="12.6" y="6" width="1.2" height="8.5" fill="#1f7fd8"/><path d="M10.8 6.2A2.3 2.3 0 0 0 10.8 10.8Z" fill="#1f7fd8"/></svg>
<div class="t " style="left:337.0px;top:127px;width:80px;text-align:center;font-size:11.3px;color:#444;">Абзац</div>
<div class="a" style="left:446px;top:56px;width:46px;height:87px;background:#e9eff6;border:1px solid #c3dcf3;box-sizing:border-box"></div>
<div class="a" style="left:454px;top:61px;width:31px;height:31px;background:#f5f8fb;border:1px solid #9cc4ec;box-sizing:border-box"></div>
<svg class="a" style="left:461px;top:66px;" width="17" height="15" viewBox="0 0 17 15"><defs><linearGradient id="pg410" x1="0" y1="0" x2="0" y2="1"><stop offset="0" stop-color="#4aa0e0"/><stop offset="0.45" stop-color="#cfe8f8"/><stop offset="0.7" stop-color="#3a8a5a"/><stop offset="1" stop-color="#2a70c0"/></linearGradient></defs><rect x="0.5" y="0.5" width="15.5" height="13.5" rx="1" fill="#fff" stroke="#8a8a8a"/><rect x="2.2" y="2.2" width="12" height="10" fill="url(#pg410)"/></svg>
<div class="t " style="left:439.0px;top:94px;width:60px;text-align:center;font-size:11.1px;color:#262626;">Вставка</div>
<svg class="a" style="left:465px;top:114px;" width="7" height="4" viewBox="0 0 7 4"><path d="M0.5 0.3H6.5L3.5 3.8Z" fill="#222"/></svg>
<svg class="a" style="left:498px;top:61px;" width="17" height="15" viewBox="0 0 17 15"><g fill="#3f5575"><path d="M2.5 1.5Q2.5 0.5 3.8 0.5Q5 0.5 5 1.5V4L7 6V13.5Q7 14.5 6 14.5H1.5Q0.5 14.5 0.5 13.5V6L2.5 4Z"/><path d="M12 1.5Q12 0.5 13.2 0.5Q14.5 0.5 14.5 1.5V4L16.5 6V13.5Q16.5 14.5 15.5 14.5H11Q10 14.5 10 13.5V6L12 4Z"/><rect x="6.5" y="5" width="4" height="3"/></g><rect x="1.7" y="8.5" width="4.1" height="5" rx="0.6" fill="#c8dcf0"/><rect x="11.2" y="8.5" width="4.1" height="5" rx="0.6" fill="#c8dcf0"/><path d="M3 1.5V4M12.5 1.5V4" stroke="#8aa0c0" stroke-width="0.8"/></svg>
<div class="t " style="left:518px;top:59px;font-size:11.1px;color:#262626;">Поиск</div>
<svg class="a" style="left:498px;top:83px;" width="18" height="17" viewBox="0 0 18 17"><text x="0.5" y="8.5" font-family="Liberation Serif" font-weight="bold" font-size="9.5" fill="#1e3350">a</text><text x="5.5" y="8.5" font-family="Liberation Serif" font-size="10" fill="#9a9a9a">b</text><path d="M1.5 9.5V12.5H5" fill="none" stroke="#1f7fd8" stroke-width="1.4"/><path d="M4.5 10.8L6.8 12.5L4.5 14.2Z" fill="#1f7fd8"/><text x="6.5" y="15.5" font-family="Liberation Sans" font-weight="bold" font-size="8.5" fill="#1e3350">a</text><text x="11.5" y="15.5" font-family="Liberation Sans" font-weight="bold" font-size="8.5" fill="#2a9a2a">c</text></svg>
<div class="t " style="left:518px;top:81px;font-size:11.1px;color:#262626;">Замена</div>
<svg class="a" style="left:499px;top:106px;" width="16" height="16" viewBox="0 0 16 16"><rect x="0.5" y="0.5" width="14" height="14" fill="none" stroke="#1e3350" stroke-dasharray="1.5 1.5"/><rect x="3" y="3" width="9" height="9" fill="#cfe3f7" stroke="#4a90d9"/></svg>
<div class="t " style="left:518px;top:103px;font-size:10.9px;color:#262626;">Выделить все</div>
<div class="t " style="left:505.0px;top:127px;width:80px;text-align:center;font-size:11.3px;color:#444;">Правка</div>
<div class="a" style="left:0px;top:145px;width:683px;height:30px;background:#c5cfde"></div>
<div class="a" style="left:0px;top:152px;width:683px;height:14px;background:#e3e8ef"></div>
<div class="a" style="left:64px;top:152px;width:553px;height:14px;background:#fff"></div>
<svg class="a" style="left:0px;top:145px;" width="683" height="30" viewBox="0 0 683 30"><rect x="7.3" y="10.8" width="1.3" height="5" fill="#444"/><rect x="16.8" y="13" width="1.3" height="1.6" fill="#444"/><text x="25.9" y="17.8" text-anchor="middle" font-family="Liberation Sans" font-size="12.3" fill="#3a3a3a">1</text><rect x="35.7" y="13" width="1.3" height="1.6" fill="#444"/><rect x="45.1" y="10.8" width="1.3" height="5" fill="#444"/><rect x="54.5" y="13" width="1.3" height="1.6" fill="#444"/><rect x="73.5" y="13" width="1.3" height="1.6" fill="#444"/><rect x="82.9" y="10.8" width="1.3" height="5" fill="#444"/><rect x="92.3" y="13" width="1.3" height="1.6" fill="#444"/><text x="101.5" y="17.8" text-anchor="middle" font-family="Liberation Sans" font-size="12.3" fill="#3a3a3a">1</text><rect x="111.2" y="13" width="1.3" height="1.6" fill="#444"/><rect x="120.7" y="10.8" width="1.3" height="5" fill="#444"/><rect x="130.2" y="13" width="1.3" height="1.6" fill="#444"/><text x="139.3" y="17.8" text-anchor="middle" font-family="Liberation Sans" font-size="12.3" fill="#3a3a3a">2</text><rect x="149.0" y="13" width="1.3" height="1.6" fill="#444"/><rect x="158.5" y="10.8" width="1.3" height="5" fill="#444"/><rect x="167.9" y="13" width="1.3" height="1.6" fill="#444"/><text x="177.1" y="17.8" text-anchor="middle" font-family="Liberation Sans" font-size="12.3" fill="#3a3a3a">3</text><rect x="186.8" y="13" width="1.3" height="1.6" fill="#444"/><rect x="196.3" y="10.8" width="1.3" height="5" fill="#444"/><rect x="205.7" y="13" width="1.3" height="1.6" fill="#444"/><text x="214.9" y="17.8" text-anchor="middle" font-family="Liberation Sans" font-size="12.3" fill="#3a3a3a">4</text><rect x="224.6" y="13" width="1.3" height="1.6" fill="#444"/><rect x="234.1" y="10.8" width="1.3" height="5" fill="#444"/><rect x="243.5" y="13" width="1.3" height="1.6" fill="#444"/><text x="252.7" y="17.8" text-anchor="middle" font-family="Liberation Sans" font-size="12.3" fill="#3a3a3a">5</text><rect x="262.4" y="13" width="1.3" height="1.6" fill="#444"/><rect x="271.9" y="10.8" width="1.3" height="5" fill="#444"/><rect x="281.4" y="13" width="1.3" height="1.6" fill="#444"/><text x="290.5" y="17.8" text-anchor="middle" font-family="Liberation Sans" font-size="12.3" fill="#3a3a3a">6</text><rect x="300.2" y="13" width="1.3" height="1.6" fill="#444"/><rect x="309.7" y="10.8" width="1.3" height="5" fill="#444"/><rect x="319.1" y="13" width="1.3" height="1.6" fill="#444"/><text x="328.3" y="17.8" text-anchor="middle" font-family="Liberation Sans" font-size="12.3" fill="#3a3a3a">7</text><rect x="338.0" y="13" width="1.3" height="1.6" fill="#444"/><rect x="347.5" y="10.8" width="1.3" height="5" fill="#444"/><rect x="356.9" y="13" width="1.3" height="1.6" fill="#444"/><text x="366.1" y="17.8" text-anchor="middle" font-family="Liberation Sans" font-size="12.3" fill="#3a3a3a">8</text><rect x="375.8" y="13" width="1.3" height="1.6" fill="#444"/><rect x="385.3" y="10.8" width="1.3" height="5" fill="#444"/><rect x="394.8" y="13" width="1.3" height="1.6" fill="#444"/><text x="403.9" y="17.8" text-anchor="middle" font-family="Liberation Sans" font-size="12.3" fill="#3a3a3a">9</text><rect x="413.6" y="13" width="1.3" height="1.6" fill="#444"/><rect x="423.1" y="10.8" width="1.3" height="5" fill="#444"/><rect x="432.6" y="13" width="1.3" height="1.6" fill="#444"/><text x="441.7" y="17.8" text-anchor="middle" font-family="Liberation Sans" font-size="12.3" fill="#3a3a3a">10</text><rect x="451.4" y="13" width="1.3" height="1.6" fill="#444"/><rect x="460.9" y="10.8" width="1.3" height="5" fill="#444"/><rect x="470.4" y="13" width="1.3" height="1.6" fill="#444"/><text x="479.5" y="17.8" text-anchor="middle" font-family="Liberation Sans" font-size="12.3" fill="#3a3a3a">11</text><rect x="489.2" y="13" width="1.3" height="1.6" fill="#444"/><rect x="498.7" y="10.8" width="1.3" height="5" fill="#444"/><rect x="508.1" y="13" width="1.3" height="1.6" fill="#444"/><text x="517.3" y="17.8" text-anchor="middle" font-family="Liberation Sans" font-size="12.3" fill="#3a3a3a">12</text><rect x="527.0" y="13" width="1.3" height="1.6" fill="#444"/><rect x="536.5" y="10.8" width="1.3" height="5" fill="#444"/><rect x="545.9" y="13" width="1.3" height="1.6" fill="#444"/><text x="555.1" y="17.8" text-anchor="middle" font-family="Liberation Sans" font-size="12.3" fill="#3a3a3a">13</text><rect x="564.9" y="13" width="1.3" height="1.6" fill="#444"/><rect x="574.3" y="10.8" width="1.3" height="5" fill="#444"/><rect x="583.8" y="13" width="1.3" height="1.6" fill="#444"/><text x="592.9" y="17.8" text-anchor="middle" font-family="Liberation Sans" font-size="12.3" fill="#3a3a3a">14</text><rect x="602.6" y="13" width="1.3" height="1.6" fill="#444"/><rect x="612.1" y="10.8" width="1.3" height="5" fill="#444"/><rect x="621.5" y="13" width="1.3" height="1.6" fill="#444"/><text x="630.7" y="17.8" text-anchor="middle" font-family="Liberation Sans" font-size="12.3" fill="#3a3a3a">15</text><rect x="640.5" y="13" width="1.3" height="1.6" fill="#444"/><rect x="649.9" y="10.8" width="1.3" height="5" fill="#444"/><rect x="659.4" y="13" width="1.3" height="1.6" fill="#444"/><text x="668.5" y="17.8" text-anchor="middle" font-family="Liberation Sans" font-size="12.3" fill="#3a3a3a">16</text><rect x="678.2" y="13" width="1.3" height="1.6" fill="#444"/><rect x="112.5" y="22" width="1" height="2" fill="#8f9bb0"/><rect x="160.5" y="22" width="1" height="2" fill="#8f9bb0"/><rect x="208.5" y="22" width="1" height="2" fill="#8f9bb0"/><rect x="256.5" y="22" width="1" height="2" fill="#8f9bb0"/><rect x="304.5" y="22" width="1" height="2" fill="#8f9bb0"/><rect x="352.5" y="22" width="1" height="2" fill="#8f9bb0"/><rect x="400.5" y="22" width="1" height="2" fill="#8f9bb0"/><rect x="448.5" y="22" width="1" height="2" fill="#8f9bb0"/><rect x="496.5" y="22" width="1" height="2" fill="#8f9bb0"/><rect x="544.5" y="22" width="1" height="2" fill="#8f9bb0"/><rect x="592.5" y="22" width="1" height="2" fill="#8f9bb0"/></svg>
<svg class="a" style="left:58px;top:150px;" width="11" height="24" viewBox="0 0 11 24"><path d="M1 1H10L5.5 8.5Z M1 16H10L5.5 8.5Z" fill="#fff" stroke="#3f5775"/><rect x="1" y="16" width="9" height="7" fill="#fff" stroke="#3f5775"/></svg>
<svg class="a" style="left:612px;top:151px;" width="11" height="17" viewBox="0 0 11 17"><path d="M5.5 0V8" stroke="#5a6f8a" stroke-width="1"/><path d="M1 15.5V12L5.5 8L10 12V15.5Z" fill="#fff" stroke="#3f5775" stroke-width="1.1"/><rect x="1.5" y="12.5" width="8" height="2.5" fill="#dfe6ee"/></svg>
<pre class="doc" style="left:63px;top:191px">[PARAMS]
pnum=114
GUID={BCE4BD85-11CE-48ED-B966-0BBB21BEF2C7}
name_ru=Немецкий Генштаб 1942 (1:30000)
name=German Genshtab 1942 (1:30000)
NameInCache=1942_osteuropa
DefURLBase=http://91.237.82.95:8088/pub/historic/1942
_osteuropa/
Ext=.jpg
projection=1
sradiusa=6378137
sradiusb=6378137
ParentSubMenu_ru=Исторические
ParentSubMenu=Historic
ParentSubMenu_uk=Історичні
defaultContentType=image/jpeg
ContentType=&quot;image/jpeg&quot;
MaxConnectToServerCount=1</pre>
<div class="a" style="left:63px;top:190px;width:1px;height:16px;background:#000"></div>
</div>
</body></html>
